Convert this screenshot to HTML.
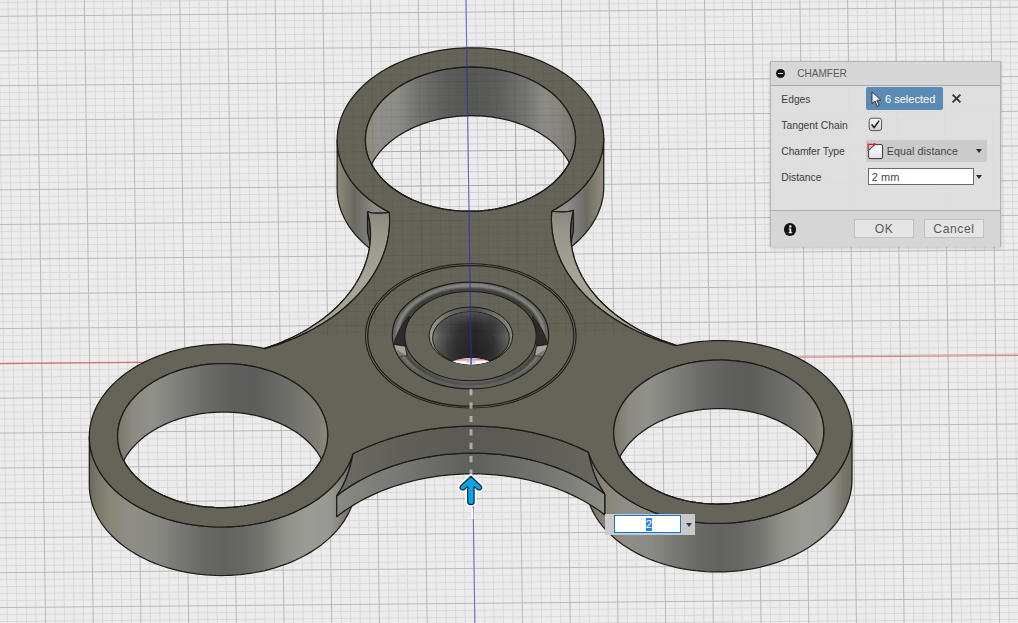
<!DOCTYPE html>
<html><head><meta charset="utf-8"><title>Chamfer</title>
<style>
html,body{margin:0;padding:0;}
body{width:1018px;height:623px;overflow:hidden;position:relative;background:#ececec;font-family:"Liberation Sans",sans-serif;}
</style></head><body>
<svg width="1018" height="623" viewBox="0 0 1018 623" style="position:absolute;left:0;top:0">
<defs><linearGradient id="gLo" gradientUnits="userSpaceOnUse" x1="89.3" y1="0" x2="355.9" y2="0"><stop offset="0.000" stop-color="#6a675c"/><stop offset="0.035" stop-color="#7d7a6d"/><stop offset="0.070" stop-color="#878477"/><stop offset="0.150" stop-color="#8f8e86"/><stop offset="0.250" stop-color="#8a8a85"/><stop offset="0.340" stop-color="#787873"/><stop offset="0.425" stop-color="#686965"/><stop offset="0.500" stop-color="#626360"/><stop offset="0.575" stop-color="#666763"/><stop offset="0.650" stop-color="#74746f"/><stop offset="0.735" stop-color="#8f908a"/><stop offset="0.815" stop-color="#9b9c96"/><stop offset="0.900" stop-color="#989892"/><stop offset="0.935" stop-color="#8a887e"/><stop offset="0.965" stop-color="#787669"/><stop offset="1.000" stop-color="#6f6c60"/></linearGradient><linearGradient id="gRo" gradientUnits="userSpaceOnUse" x1="585.4" y1="0" x2="852.0" y2="0"><stop offset="0.000" stop-color="#6a675c"/><stop offset="0.035" stop-color="#7d7a6d"/><stop offset="0.070" stop-color="#878477"/><stop offset="0.150" stop-color="#8f8e86"/><stop offset="0.250" stop-color="#8a8a85"/><stop offset="0.340" stop-color="#787873"/><stop offset="0.425" stop-color="#686965"/><stop offset="0.500" stop-color="#626360"/><stop offset="0.575" stop-color="#666763"/><stop offset="0.650" stop-color="#74746f"/><stop offset="0.735" stop-color="#8f908a"/><stop offset="0.815" stop-color="#9b9c96"/><stop offset="0.900" stop-color="#989892"/><stop offset="0.935" stop-color="#8a887e"/><stop offset="0.965" stop-color="#787669"/><stop offset="1.000" stop-color="#6f6c60"/></linearGradient><linearGradient id="gTo" gradientUnits="userSpaceOnUse" x1="337.2" y1="0" x2="603.7" y2="0"><stop offset="0.000" stop-color="#8d8978"/><stop offset="0.025" stop-color="#827e70"/><stop offset="0.065" stop-color="#6a6860"/><stop offset="0.105" stop-color="#7a7a75"/><stop offset="0.140" stop-color="#8d8d88"/><stop offset="0.175" stop-color="#8a8a86"/><stop offset="0.500" stop-color="#777777"/><stop offset="0.825" stop-color="#8c8c88"/><stop offset="0.860" stop-color="#8f8f8b"/><stop offset="0.895" stop-color="#7c7c78"/><stop offset="0.935" stop-color="#6c6b64"/><stop offset="0.975" stop-color="#858173"/><stop offset="1.000" stop-color="#8f8b7c"/></linearGradient><linearGradient id="gLi" gradientUnits="userSpaceOnUse" x1="117.6" y1="0" x2="327.6" y2="0"><stop offset="0.000" stop-color="#79776c"/><stop offset="0.075" stop-color="#8c8b81"/><stop offset="0.165" stop-color="#91918b"/><stop offset="0.285" stop-color="#7f7f7a"/><stop offset="0.425" stop-color="#6a6b68"/><stop offset="0.560" stop-color="#5e5f5c"/><stop offset="0.650" stop-color="#5d5e5b"/><stop offset="0.750" stop-color="#666763"/><stop offset="0.850" stop-color="#73736e"/><stop offset="0.955" stop-color="#817f75"/><stop offset="1.000" stop-color="#8d8a7c"/></linearGradient><linearGradient id="gRi" gradientUnits="userSpaceOnUse" x1="613.7" y1="0" x2="823.8" y2="0"><stop offset="0.000" stop-color="#79776c"/><stop offset="0.075" stop-color="#8c8b81"/><stop offset="0.165" stop-color="#91918b"/><stop offset="0.285" stop-color="#7f7f7a"/><stop offset="0.425" stop-color="#6a6b68"/><stop offset="0.560" stop-color="#5e5f5c"/><stop offset="0.650" stop-color="#5d5e5b"/><stop offset="0.750" stop-color="#666763"/><stop offset="0.850" stop-color="#73736e"/><stop offset="0.955" stop-color="#817f75"/><stop offset="1.000" stop-color="#8d8a7c"/></linearGradient><linearGradient id="gTi" gradientUnits="userSpaceOnUse" x1="365.4" y1="0" x2="575.5" y2="0"><stop offset="0.000" stop-color="#8e8c80"/><stop offset="0.075" stop-color="#90908a"/><stop offset="0.160" stop-color="#8c8c86"/><stop offset="0.245" stop-color="#737370"/><stop offset="0.395" stop-color="#5c5d5a"/><stop offset="0.500" stop-color="#565754"/><stop offset="0.630" stop-color="#5e5f5c"/><stop offset="0.765" stop-color="#747471"/><stop offset="0.850" stop-color="#8c8c87"/><stop offset="0.935" stop-color="#85847c"/><stop offset="1.000" stop-color="#7a786c"/></linearGradient><linearGradient id="gF" gradientUnits="userSpaceOnUse" x1="328.7" y1="0" x2="612.8" y2="0"><stop offset="0.000" stop-color="#8c8c86"/><stop offset="0.200" stop-color="#7c7c77"/><stop offset="0.500" stop-color="#5e5f5b"/><stop offset="0.800" stop-color="#797974"/><stop offset="1.000" stop-color="#92928c"/></linearGradient><linearGradient id="gFc" gradientUnits="userSpaceOnUse" x1="342.9" y1="0" x2="598.6" y2="0"><stop offset="0.000" stop-color="#6a6962"/><stop offset="0.250" stop-color="#5f5e57"/><stop offset="0.500" stop-color="#5a5953"/><stop offset="0.750" stop-color="#5e5d56"/><stop offset="1.000" stop-color="#66655e"/></linearGradient><linearGradient id="gLc" gradientUnits="userSpaceOnUse" x1="0" y1="210" x2="0" y2="350"><stop offset="0" stop-color="#88857a"/><stop offset="0.15" stop-color="#98958a"/><stop offset="0.5" stop-color="#a6a397"/><stop offset="1" stop-color="#a4a194"/></linearGradient><clipPath id="ch0"><path d="M575.48 138.43 L575.41 135.90 L575.22 133.38 L574.89 130.87 L574.44 128.36 L573.85 125.87 L573.15 123.39 L572.31 120.94 L571.35 118.50 L570.26 116.09 L569.05 113.71 L567.72 111.37 L566.28 109.05 L564.71 106.77 L563.02 104.54 L561.23 102.34 L559.32 100.19 L557.30 98.09 L555.17 96.04 L552.94 94.05 L550.61 92.10 L548.18 90.22 L545.65 88.40 L543.03 86.64 L540.32 84.94 L537.53 83.31 L534.65 81.75 L531.69 80.26 L528.66 78.85 L525.55 77.50 L522.38 76.24 L519.15 75.05 L515.85 73.94 L512.50 72.91 L509.10 71.96 L505.65 71.09 L502.15 70.31 L498.62 69.62 L495.05 69.01 L491.45 68.48 L487.83 68.05 L484.18 67.70 L480.52 67.44 L476.84 67.26 L473.16 67.18 L469.47 67.18 L465.79 67.28 L462.11 67.46 L458.44 67.73 L454.79 68.09 L451.15 68.53 L447.54 69.06 L443.96 69.68 L440.41 70.39 L436.89 71.18 L433.42 72.05 L429.99 73.01 L426.62 74.05 L423.29 75.16 L420.03 76.36 L416.83 77.63 L413.69 78.98 L410.63 80.41 L407.63 81.91 L404.72 83.47 L401.88 85.11 L399.13 86.81 L396.47 88.58 L393.90 90.41 L391.42 92.30 L389.05 94.24 L386.77 96.25 L384.59 98.30 L382.52 100.41 L380.56 102.56 L378.71 104.76 L376.97 107.00 L375.35 109.28 L373.84 111.60 L372.46 113.95 L371.19 116.33 L370.05 118.75 L369.03 121.18 L368.13 123.64 L367.36 126.12 L366.72 128.61 L366.21 131.12 L365.82 133.63 L365.56 136.16 L365.44 138.68 L365.44 141.21 L365.57 143.74 L365.83 146.26 L366.22 148.77 L366.74 151.27 L367.38 153.75 L368.16 156.22 L369.05 158.66 L370.08 161.09 L371.23 163.48 L372.50 165.84 L373.89 168.18 L375.39 170.47 L377.02 172.73 L378.76 174.95 L380.62 177.12 L382.58 179.24 L384.65 181.32 L386.83 183.34 L389.11 185.31 L391.50 187.23 L393.98 189.08 L396.55 190.87 L399.21 192.60 L401.97 194.26 L404.80 195.86 L407.72 197.38 L410.72 198.84 L413.78 200.22 L416.92 201.52 L420.13 202.75 L423.39 203.90 L426.72 204.97 L430.10 205.96 L433.52 206.86 L437.00 207.69 L440.51 208.43 L444.06 209.08 L447.65 209.65 L451.26 210.13 L454.89 210.52 L458.55 210.83 L462.22 211.04 L465.90 211.17 L469.58 211.21 L473.27 211.16 L476.95 211.02 L480.63 210.80 L484.29 210.48 L487.93 210.08 L491.56 209.59 L495.16 209.02 L498.72 208.35 L502.26 207.61 L505.75 206.78 L509.20 205.86 L512.60 204.86 L515.95 203.79 L519.24 202.63 L522.48 201.39 L525.65 200.08 L528.75 198.69 L531.78 197.23 L534.73 195.70 L537.61 194.10 L540.40 192.43 L543.11 190.69 L545.73 188.90 L548.25 187.04 L550.68 185.12 L553.01 183.14 L555.23 181.11 L557.36 179.03 L559.37 176.90 L561.28 174.72 L563.08 172.50 L564.76 170.24 L566.32 167.94 L567.77 165.61 L569.09 163.24 L570.30 160.84 L571.38 158.42 L572.34 155.97 L573.17 153.50 L573.87 151.02 L574.45 148.52 L574.90 146.00 L575.22 143.48 L575.42 140.96 Z"/></clipPath><clipPath id="ch1"><path d="M327.64 434.84 L327.57 432.31 L327.38 429.79 L327.05 427.27 L326.60 424.77 L326.02 422.28 L325.31 419.80 L324.47 417.34 L323.51 414.91 L322.42 412.50 L321.22 410.12 L319.89 407.77 L318.44 405.46 L316.87 403.18 L315.18 400.95 L313.39 398.75 L311.48 396.60 L309.46 394.50 L307.33 392.45 L305.10 390.45 L302.77 388.51 L300.34 386.63 L297.81 384.80 L295.19 383.04 L292.48 381.35 L289.69 379.72 L286.81 378.16 L283.85 376.67 L280.82 375.25 L277.72 373.91 L274.54 372.64 L271.31 371.45 L268.01 370.35 L264.66 369.32 L261.26 368.37 L257.81 367.50 L254.31 366.72 L250.78 366.03 L247.21 365.41 L243.61 364.89 L239.99 364.45 L236.34 364.10 L232.68 363.84 L229.00 363.67 L225.32 363.59 L221.63 363.59 L217.95 363.68 L214.27 363.87 L210.60 364.14 L206.95 364.49 L203.31 364.94 L199.70 365.47 L196.12 366.09 L192.57 366.80 L189.05 367.59 L185.58 368.46 L182.15 369.42 L178.78 370.45 L175.46 371.57 L172.19 372.77 L168.99 374.04 L165.85 375.39 L162.79 376.82 L159.79 378.31 L156.88 379.88 L154.04 381.52 L151.29 383.22 L148.63 384.99 L146.06 386.81 L143.58 388.70 L141.21 390.65 L138.93 392.65 L136.75 394.71 L134.68 396.82 L132.72 398.97 L130.87 401.17 L129.13 403.41 L127.51 405.69 L126.00 408.01 L124.62 410.36 L123.35 412.74 L122.21 415.15 L121.19 417.59 L120.29 420.05 L119.52 422.53 L118.88 425.02 L118.37 427.53 L117.98 430.04 L117.73 432.57 L117.60 435.09 L117.60 437.62 L117.73 440.15 L117.99 442.67 L118.38 445.18 L118.90 447.68 L119.54 450.16 L120.32 452.63 L121.22 455.07 L122.24 457.49 L123.39 459.89 L124.66 462.25 L126.05 464.58 L127.55 466.88 L129.18 469.14 L130.92 471.35 L132.78 473.52 L134.74 475.65 L136.81 477.73 L138.99 479.75 L141.28 481.72 L143.66 483.63 L146.14 485.49 L148.71 487.28 L151.37 489.01 L154.13 490.67 L156.96 492.26 L159.88 493.79 L162.88 495.24 L165.95 496.62 L169.08 497.93 L172.29 499.16 L175.55 500.31 L178.88 501.38 L182.26 502.36 L185.68 503.27 L189.16 504.09 L192.67 504.83 L196.22 505.49 L199.81 506.05 L203.42 506.53 L207.05 506.93 L210.71 507.23 L214.38 507.45 L218.06 507.58 L221.74 507.62 L225.43 507.57 L229.11 507.43 L232.79 507.21 L236.45 506.89 L240.10 506.49 L243.72 506.00 L247.32 505.42 L250.88 504.76 L254.42 504.01 L257.91 503.18 L261.36 502.27 L264.76 501.27 L268.11 500.19 L271.41 499.04 L274.64 497.80 L277.81 496.49 L280.91 495.10 L283.94 493.64 L286.90 492.11 L289.77 490.51 L292.56 488.84 L295.27 487.10 L297.89 485.30 L300.41 483.44 L302.84 481.52 L305.17 479.55 L307.40 477.52 L309.52 475.44 L311.53 473.31 L313.44 471.13 L315.24 468.91 L316.92 466.65 L318.48 464.35 L319.93 462.02 L321.25 459.65 L322.46 457.25 L323.54 454.83 L324.50 452.38 L325.33 449.91 L326.03 447.43 L326.61 444.92 L327.06 442.41 L327.38 439.89 L327.58 437.37 Z"/></clipPath><clipPath id="ch2"><path d="M823.77 431.25 L823.70 428.73 L823.50 426.20 L823.18 423.69 L822.73 421.18 L822.14 418.69 L821.44 416.21 L820.60 413.76 L819.64 411.32 L818.55 408.92 L817.34 406.54 L816.01 404.19 L814.56 401.87 L813.00 399.60 L811.31 397.36 L809.51 395.17 L807.60 393.02 L805.59 390.92 L803.46 388.87 L801.23 386.87 L798.90 384.93 L796.46 383.04 L793.94 381.22 L791.32 379.46 L788.61 377.76 L785.81 376.13 L782.94 374.57 L779.98 373.08 L776.95 371.67 L773.84 370.33 L770.67 369.06 L767.44 367.87 L764.14 366.76 L760.79 365.73 L757.39 364.78 L753.93 363.92 L750.44 363.14 L746.91 362.44 L743.34 361.83 L739.74 361.31 L736.12 360.87 L732.47 360.52 L728.81 360.26 L725.13 360.08 L721.45 360.00 L717.76 360.00 L714.08 360.10 L710.40 360.28 L706.73 360.55 L703.07 360.91 L699.44 361.35 L695.83 361.89 L692.25 362.51 L688.70 363.21 L685.18 364.00 L681.71 364.87 L678.28 365.83 L674.91 366.87 L671.58 367.99 L668.32 369.18 L665.12 370.46 L661.98 371.81 L658.91 373.23 L655.92 374.73 L653.01 376.29 L650.17 377.93 L647.42 379.63 L644.76 381.40 L642.19 383.23 L639.71 385.12 L637.33 387.07 L635.06 389.07 L632.88 391.12 L630.81 393.23 L628.85 395.38 L627.00 397.58 L625.26 399.82 L623.64 402.10 L622.13 404.42 L620.74 406.77 L619.48 409.16 L618.34 411.57 L617.32 414.00 L616.42 416.46 L615.65 418.94 L615.01 421.43 L614.50 423.94 L614.11 426.46 L613.85 428.98 L613.73 431.51 L613.73 434.04 L613.86 436.56 L614.12 439.08 L614.51 441.59 L615.03 444.09 L615.67 446.57 L616.45 449.04 L617.34 451.49 L618.37 453.91 L619.51 456.30 L620.78 458.67 L622.17 461.00 L623.68 463.29 L625.31 465.55 L627.05 467.77 L628.91 469.94 L630.87 472.06 L632.94 474.14 L635.12 476.16 L637.40 478.13 L639.79 480.05 L642.27 481.90 L644.84 483.69 L647.50 485.42 L650.26 487.08 L653.09 488.68 L656.01 490.20 L659.01 491.66 L662.07 493.04 L665.21 494.34 L668.42 495.57 L671.68 496.72 L675.01 497.79 L678.38 498.78 L681.81 499.69 L685.29 500.51 L688.80 501.25 L692.35 501.90 L695.94 502.47 L699.55 502.95 L703.18 503.34 L706.84 503.65 L710.51 503.86 L714.19 503.99 L717.87 504.03 L721.56 503.98 L725.24 503.85 L728.92 503.62 L732.58 503.31 L736.22 502.90 L739.85 502.42 L743.45 501.84 L747.01 501.18 L750.55 500.43 L754.04 499.60 L757.49 498.68 L760.89 497.69 L764.24 496.61 L767.53 495.45 L770.77 494.21 L773.94 492.90 L777.04 491.52 L780.07 490.05 L783.02 488.52 L785.90 486.92 L788.69 485.25 L791.40 483.52 L794.01 481.72 L796.54 479.86 L798.97 477.94 L801.30 475.96 L803.52 473.93 L805.65 471.85 L807.66 469.72 L809.57 467.55 L811.36 465.33 L813.05 463.07 L814.61 460.77 L816.06 458.43 L817.38 456.06 L818.59 453.67 L819.67 451.24 L820.63 448.79 L821.46 446.33 L822.16 443.84 L822.74 441.34 L823.19 438.83 L823.51 436.31 L823.70 433.78 Z"/></clipPath><clipPath id="cAbove"><path d="M0 0H1018V331.7L0 339.0Z"/></clipPath></defs>
<rect width="1018" height="623" fill="#ececec"/>
<g id="grid"><path d="M-49.16 0L-40.31 623 M-39.62 0L-30.77 623 M-30.08 0L-21.23 623 M-20.54 0L-11.69 623 M-1.46 0L7.39 623 M8.08 0L16.93 623 M17.62 0L26.47 623 M27.16 0L36.01 623 M46.24 0L55.09 623 M55.78 0L64.63 623 M65.32 0L74.17 623 M74.86 0L83.71 623 M93.94 0L102.79 623 M103.48 0L112.33 623 M113.02 0L121.87 623 M122.56 0L131.41 623 M141.64 0L150.49 623 M151.18 0L160.03 623 M160.72 0L169.57 623 M170.26 0L179.11 623 M189.34 0L198.19 623 M198.88 0L207.73 623 M208.42 0L217.27 623 M217.96 0L226.81 623 M237.04 0L245.89 623 M246.58 0L255.43 623 M256.12 0L264.97 623 M265.66 0L274.51 623 M284.74 0L293.59 623 M294.28 0L303.13 623 M303.82 0L312.67 623 M313.36 0L322.21 623 M332.44 0L341.29 623 M341.98 0L350.83 623 M351.52 0L360.37 623 M361.06 0L369.91 623 M380.14 0L388.99 623 M389.68 0L398.53 623 M399.22 0L408.07 623 M408.76 0L417.61 623 M427.84 0L436.69 623 M437.38 0L446.23 623 M446.92 0L455.77 623 M456.46 0L465.31 623 M475.54 0L484.39 623 M485.08 0L493.93 623 M494.62 0L503.47 623 M504.16 0L513.01 623 M523.24 0L532.09 623 M532.78 0L541.63 623 M542.32 0L551.17 623 M551.86 0L560.71 623 M570.94 0L579.79 623 M580.48 0L589.33 623 M590.02 0L598.87 623 M599.56 0L608.41 623 M618.64 0L627.49 623 M628.18 0L637.03 623 M637.72 0L646.57 623 M647.26 0L656.11 623 M666.34 0L675.19 623 M675.88 0L684.73 623 M685.42 0L694.27 623 M694.96 0L703.81 623 M714.04 0L722.89 623 M723.58 0L732.43 623 M733.12 0L741.97 623 M742.66 0L751.51 623 M761.74 0L770.59 623 M771.28 0L780.13 623 M780.82 0L789.67 623 M790.36 0L799.21 623 M809.44 0L818.29 623 M818.98 0L827.83 623 M828.52 0L837.37 623 M838.06 0L846.91 623 M857.14 0L865.99 623 M866.68 0L875.53 623 M876.22 0L885.07 623 M885.76 0L894.61 623 M904.84 0L913.69 623 M914.38 0L923.23 623 M923.92 0L932.77 623 M933.46 0L942.31 623 M952.54 0L961.39 623 M962.08 0L970.93 623 M971.62 0L980.47 623 M981.16 0L990.01 623 M1000.24 0L1009.09 623 M1009.78 0L1018.63 623 M1019.32 0L1028.17 623 M1028.86 0L1037.71 623 M1047.94 0L1056.79 623 M1057.48 0L1066.33 623 M1067.02 0L1075.87 623 M1076.56 0L1085.41 623 M0 -11.46L1018 -20.62 M0 -4.52L1018 -13.68 M0 2.42L1018 -6.74 M0 9.36L1018 0.20 M0 23.24L1018 14.08 M0 30.18L1018 21.02 M0 37.12L1018 27.96 M0 44.06L1018 34.90 M0 57.94L1018 48.78 M0 64.88L1018 55.72 M0 71.82L1018 62.66 M0 78.76L1018 69.60 M0 92.64L1018 83.48 M0 99.58L1018 90.42 M0 106.52L1018 97.36 M0 113.46L1018 104.30 M0 127.34L1018 118.18 M0 134.28L1018 125.12 M0 141.22L1018 132.06 M0 148.16L1018 139.00 M0 162.04L1018 152.88 M0 168.98L1018 159.82 M0 175.92L1018 166.76 M0 182.86L1018 173.70 M0 196.74L1018 187.58 M0 203.68L1018 194.52 M0 210.62L1018 201.46 M0 217.56L1018 208.40 M0 231.44L1018 222.28 M0 238.38L1018 229.22 M0 245.32L1018 236.16 M0 252.26L1018 243.10 M0 266.14L1018 256.98 M0 273.08L1018 263.92 M0 280.02L1018 270.86 M0 286.96L1018 277.80 M0 300.84L1018 291.68 M0 307.78L1018 298.62 M0 314.72L1018 305.56 M0 321.66L1018 312.50 M0 335.54L1018 326.38 M0 342.48L1018 333.32 M0 349.42L1018 340.26 M0 356.36L1018 347.20 M0 370.28L1018 361.12 M0 377.26L1018 368.10 M0 384.24L1018 375.08 M0 391.22L1018 382.06 M0 405.18L1018 396.02 M0 412.16L1018 403.00 M0 419.14L1018 409.98 M0 426.12L1018 416.96 M0 440.08L1018 430.92 M0 447.06L1018 437.90 M0 454.04L1018 444.88 M0 461.02L1018 451.86 M0 474.98L1018 465.82 M0 481.96L1018 472.80 M0 488.94L1018 479.78 M0 495.92L1018 486.76 M0 509.88L1018 500.72 M0 516.86L1018 507.70 M0 523.84L1018 514.68 M0 530.82L1018 521.66 M0 544.78L1018 535.62 M0 551.76L1018 542.60 M0 558.74L1018 549.58 M0 565.72L1018 556.56 M0 579.68L1018 570.52 M0 586.66L1018 577.50 M0 593.64L1018 584.48 M0 600.62L1018 591.46 M0 614.58L1018 605.42 M0 621.56L1018 612.40 M0 628.54L1018 619.38 M0 635.52L1018 626.36 M0 649.48L1018 640.32 M0 656.46L1018 647.30 M0 663.44L1018 654.28 M0 670.42L1018 661.26" stroke="#d7d7d7" stroke-width="0.9" fill="none"/><path d="M-58.70 0L-49.85 623 M-11.00 0L-2.15 623 M36.70 0L45.55 623 M84.40 0L93.25 623 M132.10 0L140.95 623 M179.80 0L188.65 623 M227.50 0L236.35 623 M275.20 0L284.05 623 M322.90 0L331.75 623 M370.60 0L379.45 623 M418.30 0L427.15 623 M466.00 0L474.85 623 M513.70 0L522.55 623 M561.40 0L570.25 623 M609.10 0L617.95 623 M656.80 0L665.65 623 M704.50 0L713.35 623 M752.20 0L761.05 623 M799.90 0L808.75 623 M847.60 0L856.45 623 M895.30 0L904.15 623 M943.00 0L951.85 623 M990.70 0L999.55 623 M1038.40 0L1047.25 623 M0 -18.40L1018 -27.56 M0 16.30L1018 7.14 M0 51.00L1018 41.84 M0 85.70L1018 76.54 M0 120.40L1018 111.24 M0 155.10L1018 145.94 M0 189.80L1018 180.64 M0 224.50L1018 215.34 M0 259.20L1018 250.04 M0 293.90L1018 284.74 M0 328.60L1018 319.44 M0 363.30L1018 354.14 M0 398.20L1018 389.04 M0 433.10L1018 423.94 M0 468.00L1018 458.84 M0 502.90L1018 493.74 M0 537.80L1018 528.64 M0 572.70L1018 563.54 M0 607.60L1018 598.44 M0 642.50L1018 633.34" stroke="#b9b9b9" stroke-width="1" fill="none"/></g>
<path d="M0 363.6L1018 355.46" stroke="#e83030" stroke-opacity="0.62" stroke-width="1.1"/>
<path d="M466.00 0L474.85 623" stroke="#3030e0" stroke-opacity="0.55" stroke-width="1.1"/>
<g id="body"><path d="M89.32 436.56 L89.41 439.95 L89.69 443.33 L90.15 446.70 L90.80 450.06 L91.62 453.40 L92.62 456.71 L93.81 459.99 L95.17 463.24 L96.70 466.45 L98.41 469.62 L100.29 472.75 L102.34 475.82 L104.55 478.83 L106.93 481.79 L109.46 484.68 L112.15 487.51 L114.99 490.26 L117.98 492.94 L121.12 495.54 L124.39 498.06 L127.80 500.49 L131.34 502.83 L135.01 505.08 L138.79 507.24 L142.69 509.29 L146.70 511.25 L150.82 513.10 L155.03 514.84 L159.34 516.48 L163.73 518.00 L168.21 519.41 L172.76 520.70 L177.38 521.88 L182.06 522.94 L186.79 523.88 L191.58 524.70 L196.41 525.39 L201.27 525.96 L206.16 526.41 L211.08 526.73 L216.01 526.93 L220.95 527.00 L225.90 526.94 L230.84 526.76 L235.76 526.46 L240.67 526.03 L245.56 525.47 L250.41 524.79 L255.23 523.99 L260.00 523.07 L264.72 522.03 L269.38 520.86 L273.97 519.58 L278.50 518.19 L282.95 516.68 L287.31 515.06 L291.59 513.33 L295.77 511.49 L299.85 509.55 L303.83 507.51 L307.69 505.37 L311.44 503.13 L315.06 500.80 L318.56 498.38 L321.92 495.87 L325.15 493.28 L328.24 490.61 L331.18 487.87 L333.98 485.05 L336.61 482.17 L339.10 479.22 L341.42 476.21 L343.58 473.15 L345.57 470.03 L347.39 466.87 L349.05 463.66 L350.52 460.42 L351.83 457.14 L352.95 453.83 L352.95 453.83 L352.37 456.85 L351.71 459.93 L350.97 463.09 L350.12 466.32 L349.16 469.66 L348.04 473.11 L346.75 476.73 L345.22 480.55 L343.35 484.68 L340.93 489.31 L337.39 494.96 L336.69 497.01 L336.69 498.25 L336.69 499.50 L336.69 500.74 L336.69 501.98 L336.69 503.23 L336.69 504.47 L336.69 505.71 L336.69 506.96 L336.69 508.20 L336.69 509.45 L336.69 510.69 L336.69 511.93 L336.69 513.18 L336.69 514.42 L336.69 515.67 L337.39 516.10 L340.93 512.94 L343.35 510.80 L345.22 509.16 L346.75 507.82 L348.04 506.70 L349.16 505.73 L350.12 504.88 L350.97 504.13 L351.71 503.47 L352.37 502.87 L352.95 502.34 L352.95 502.34 L351.83 505.65 L350.52 508.93 L349.05 512.17 L347.39 515.38 L345.57 518.54 L343.58 521.66 L341.42 524.72 L339.10 527.73 L336.61 530.68 L333.98 533.56 L331.18 536.38 L328.24 539.12 L325.15 541.79 L321.92 544.38 L318.56 546.89 L315.06 549.31 L311.44 551.64 L307.69 553.88 L303.83 556.02 L299.85 558.06 L295.77 560.00 L291.59 561.84 L287.31 563.57 L282.95 565.19 L278.50 566.70 L273.97 568.09 L269.38 569.37 L264.72 570.54 L260.00 571.58 L255.23 572.50 L250.41 573.30 L245.56 573.98 L240.67 574.54 L235.76 574.97 L230.84 575.27 L225.90 575.45 L220.95 575.51 L216.01 575.44 L211.08 575.24 L206.16 574.92 L201.27 574.47 L196.41 573.90 L191.58 573.21 L186.79 572.39 L182.06 571.45 L177.38 570.39 L172.76 569.21 L168.21 567.92 L163.73 566.51 L159.34 564.99 L155.03 563.35 L150.82 561.61 L146.70 559.76 L142.69 557.80 L138.79 555.75 L135.01 553.59 L131.34 551.34 L127.80 549.00 L124.39 546.57 L121.12 544.05 L117.98 541.45 L114.99 538.77 L112.15 536.02 L109.46 533.19 L106.93 530.30 L104.55 527.34 L102.34 524.33 L100.29 521.26 L98.41 518.13 L96.70 514.96 L95.17 511.75 L93.81 508.50 L92.62 505.22 L91.62 501.91 L90.80 498.57 L90.15 495.21 L89.69 491.84 L89.41 488.46 L89.32 485.07 Z" fill="url(#gLo)" stroke="#1d1c19" stroke-width="1.25" stroke-linejoin="round" /><path d="M852.03 431.05 L851.94 434.44 L851.67 437.83 L851.21 441.20 L850.58 444.57 L849.76 447.92 L848.76 451.25 L847.58 454.55 L846.22 457.82 L844.69 461.05 L842.99 464.24 L841.12 467.39 L839.07 470.49 L836.86 473.54 L834.49 476.53 L831.96 479.46 L829.28 482.33 L826.44 485.12 L823.45 487.84 L820.32 490.49 L817.05 493.05 L813.65 495.53 L810.11 497.93 L806.45 500.23 L802.67 502.44 L798.77 504.55 L794.76 506.56 L790.65 508.47 L786.44 510.28 L782.13 511.97 L777.74 513.56 L773.27 515.04 L768.72 516.40 L764.11 517.64 L759.43 518.77 L754.69 519.77 L749.91 520.66 L745.08 521.43 L740.22 522.07 L735.32 522.58 L730.41 522.98 L725.48 523.25 L720.53 523.39 L715.59 523.41 L710.65 523.30 L705.72 523.06 L700.81 522.70 L695.93 522.22 L691.07 521.61 L686.26 520.88 L681.49 520.02 L676.77 519.05 L672.10 517.95 L667.51 516.74 L662.98 515.41 L658.53 513.97 L654.16 512.41 L649.88 510.74 L645.69 508.96 L641.61 507.08 L637.63 505.10 L633.76 503.01 L630.02 500.83 L626.39 498.55 L622.89 496.18 L619.52 493.72 L616.29 491.18 L613.19 488.56 L610.25 485.85 L607.45 483.08 L604.81 480.23 L602.32 477.32 L599.99 474.34 L597.83 471.31 L595.83 468.22 L594.01 465.09 L592.35 461.90 L590.87 458.68 L589.56 455.42 L588.43 452.13 L588.43 452.13 L589.01 455.14 L589.67 458.21 L590.42 461.36 L591.27 464.58 L592.24 467.90 L593.35 471.34 L594.65 474.94 L596.18 478.74 L598.06 482.84 L600.48 487.43 L604.03 493.03 L604.73 495.07 L604.73 496.31 L604.73 497.56 L604.73 498.80 L604.73 500.05 L604.73 501.29 L604.73 502.53 L604.73 503.78 L604.73 505.02 L604.73 506.27 L604.73 507.51 L604.73 508.75 L604.73 510.00 L604.73 511.24 L604.73 512.48 L604.73 513.73 L604.03 514.18 L600.48 511.06 L598.06 508.96 L596.18 507.35 L594.65 506.03 L593.35 504.92 L592.24 503.97 L591.27 503.14 L590.42 502.40 L589.67 501.75 L589.01 501.16 L588.43 500.64 L588.43 500.64 L589.56 503.93 L590.87 507.19 L592.35 510.41 L594.01 513.60 L595.83 516.73 L597.83 519.82 L599.99 522.85 L602.32 525.83 L604.81 528.74 L607.45 531.59 L610.25 534.36 L613.19 537.07 L616.29 539.69 L619.52 542.23 L622.89 544.69 L626.39 547.06 L630.02 549.34 L633.76 551.52 L637.63 553.61 L641.61 555.59 L645.69 557.47 L649.88 559.25 L654.16 560.92 L658.53 562.48 L662.98 563.92 L667.51 565.25 L672.10 566.46 L676.77 567.56 L681.49 568.53 L686.26 569.39 L691.07 570.12 L695.93 570.73 L700.81 571.21 L705.72 571.57 L710.65 571.81 L715.59 571.92 L720.53 571.90 L725.48 571.76 L730.41 571.49 L735.32 571.09 L740.22 570.58 L745.08 569.94 L749.91 569.17 L754.69 568.28 L759.43 567.28 L764.11 566.15 L768.72 564.91 L773.27 563.55 L777.74 562.07 L782.13 560.48 L786.44 558.79 L790.65 556.98 L794.76 555.07 L798.77 553.06 L802.67 550.95 L806.45 548.74 L810.11 546.44 L813.65 544.04 L817.05 541.56 L820.32 539.00 L823.45 536.35 L826.44 533.63 L829.28 530.84 L831.96 527.97 L834.49 525.04 L836.86 522.05 L839.07 519.00 L841.12 515.90 L842.99 512.75 L844.69 509.56 L846.22 506.33 L847.58 503.06 L848.76 499.76 L849.76 496.43 L850.58 493.08 L851.21 489.71 L851.67 486.34 L851.94 482.95 L852.03 479.56 Z" fill="url(#gRo)" stroke="#1d1c19" stroke-width="1.25" stroke-linejoin="round" /><path d="M337.16 140.15 L337.17 141.21 L337.20 142.27 L337.24 143.33 L337.31 144.39 L337.39 145.45 L337.49 146.50 L337.60 147.56 L337.74 148.61 L337.89 149.66 L338.06 150.72 L338.25 151.77 L338.46 152.81 L338.68 153.86 L338.92 154.91 L339.18 155.95 L339.46 156.99 L339.75 158.03 L340.06 159.06 L340.39 160.09 L340.74 161.12 L341.11 162.15 L341.49 163.17 L341.89 164.19 L342.30 165.21 L342.74 166.23 L343.19 167.24 L343.65 168.24 L344.14 169.24 L344.64 170.24 L345.16 171.24 L345.70 172.23 L346.25 173.21 L346.82 174.19 L347.40 175.17 L348.00 176.14 L348.62 177.11 L349.26 178.07 L349.91 179.02 L350.58 179.98 L351.26 180.92 L351.96 181.86 L352.67 182.79 L353.41 183.72 L354.15 184.64 L354.92 185.56 L355.69 186.47 L356.49 187.37 L357.30 188.27 L358.12 189.16 L358.96 190.04 L359.81 190.92 L360.68 191.79 L361.57 192.65 L362.46 193.51 L363.38 194.36 L364.30 195.20 L365.25 196.03 L366.20 196.86 L367.17 197.68 L368.15 198.49 L369.15 199.29 L370.16 200.08 L371.19 200.87 L372.22 201.65 L373.28 202.42 L374.34 203.18 L375.42 203.93 L376.51 204.67 L377.61 205.41 L378.72 206.13 L379.85 206.85 L380.99 207.56 L382.14 208.25 L383.30 208.94 L384.48 209.62 L385.66 210.29 L386.86 210.95 L388.07 211.61 L389.29 212.25 L389.29 212.25 L387.48 212.54 L385.66 212.78 L383.82 212.98 L381.96 213.12 L380.07 213.21 L378.15 213.22 L376.20 213.17 L374.20 213.03 L372.16 212.79 L370.05 212.44 L367.87 211.94 L367.55 212.92 L367.55 214.16 L367.55 215.40 L367.55 216.65 L367.55 217.89 L367.55 219.14 L367.55 220.38 L367.55 221.62 L367.55 222.87 L367.55 224.11 L367.55 225.36 L367.55 226.60 L367.55 227.84 L367.55 229.09 L367.55 230.33 L367.55 231.57 L367.87 233.08 L370.05 236.07 L372.16 238.91 L374.20 241.64 L376.20 244.27 L378.15 246.81 L380.07 249.28 L381.96 251.68 L383.82 254.02 L385.66 256.32 L387.48 258.56 L389.29 260.76 L389.29 260.76 L388.07 260.12 L386.86 259.46 L385.66 258.80 L384.48 258.13 L383.30 257.45 L382.14 256.76 L380.99 256.07 L379.85 255.36 L378.72 254.64 L377.61 253.92 L376.51 253.18 L375.42 252.44 L374.34 251.69 L373.28 250.93 L372.22 250.16 L371.19 249.38 L370.16 248.59 L369.15 247.80 L368.15 247.00 L367.17 246.19 L366.20 245.37 L365.25 244.54 L364.30 243.71 L363.38 242.87 L362.46 242.02 L361.57 241.16 L360.68 240.30 L359.81 239.43 L358.96 238.55 L358.12 237.67 L357.30 236.78 L356.49 235.88 L355.69 234.98 L354.92 234.07 L354.15 233.15 L353.41 232.23 L352.67 231.30 L351.96 230.37 L351.26 229.43 L350.58 228.49 L349.91 227.53 L349.26 226.58 L348.62 225.62 L348.00 224.65 L347.40 223.68 L346.82 222.70 L346.25 221.72 L345.70 220.74 L345.16 219.75 L344.64 218.75 L344.14 217.75 L343.65 216.75 L343.19 215.75 L342.74 214.74 L342.30 213.72 L341.89 212.70 L341.49 211.68 L341.11 210.66 L340.74 209.63 L340.39 208.60 L340.06 207.57 L339.75 206.54 L339.46 205.50 L339.18 204.46 L338.92 203.42 L338.68 202.37 L338.46 201.32 L338.25 200.28 L338.06 199.23 L337.89 198.17 L337.74 197.12 L337.60 196.07 L337.49 195.01 L337.39 193.96 L337.31 192.90 L337.24 191.84 L337.20 190.78 L337.17 189.72 L337.16 188.66 Z" fill="url(#gTo)" stroke="#1d1c19" stroke-width="1.25" stroke-linejoin="round" /><path d="M603.74 138.23 L603.73 139.29 L603.71 140.35 L603.66 141.40 L603.60 142.46 L603.52 143.52 L603.42 144.58 L603.31 145.64 L603.17 146.69 L603.02 147.75 L602.85 148.80 L602.67 149.86 L602.46 150.91 L602.24 151.96 L602.00 153.00 L601.74 154.05 L601.47 155.09 L601.17 156.14 L600.86 157.18 L600.54 158.21 L600.19 159.25 L599.83 160.28 L599.45 161.31 L599.05 162.34 L598.64 163.36 L598.20 164.38 L597.75 165.40 L597.29 166.41 L596.81 167.42 L596.30 168.42 L595.79 169.43 L595.25 170.42 L594.70 171.42 L594.14 172.41 L593.55 173.39 L592.95 174.37 L592.33 175.35 L591.70 176.32 L591.05 177.28 L590.38 178.24 L589.70 179.20 L589.00 180.15 L588.29 181.09 L587.56 182.03 L586.82 182.96 L586.05 183.89 L585.28 184.81 L584.49 185.73 L583.68 186.63 L582.86 187.54 L582.02 188.43 L581.16 189.32 L580.30 190.20 L579.41 191.08 L578.52 191.95 L577.61 192.81 L576.68 193.66 L575.74 194.51 L574.79 195.35 L573.82 196.18 L572.83 197.01 L571.84 197.82 L570.83 198.63 L569.81 199.43 L568.77 200.23 L567.72 201.01 L566.66 201.79 L565.58 202.55 L564.49 203.31 L563.39 204.06 L562.28 204.81 L561.15 205.54 L560.02 206.26 L558.87 206.98 L557.70 207.68 L556.53 208.38 L555.34 209.07 L554.15 209.75 L552.94 210.41 L551.72 211.07 L551.72 211.07 L553.53 211.34 L555.35 211.55 L557.19 211.72 L559.05 211.84 L560.93 211.90 L562.85 211.89 L564.80 211.81 L566.79 211.64 L568.84 211.37 L570.94 210.98 L573.12 210.45 L573.44 211.43 L573.44 212.67 L573.44 213.92 L573.44 215.16 L573.44 216.40 L573.44 217.65 L573.44 218.89 L573.44 220.14 L573.44 221.38 L573.44 222.62 L573.44 223.87 L573.44 225.11 L573.44 226.35 L573.44 227.60 L573.44 228.84 L573.44 230.09 L573.12 231.60 L570.94 234.62 L568.84 237.49 L566.79 240.25 L564.80 242.90 L562.85 245.47 L560.93 247.97 L559.05 250.40 L557.19 252.77 L555.35 255.09 L553.53 257.36 L551.72 259.58 L551.72 259.58 L552.94 258.92 L554.15 258.26 L555.34 257.58 L556.53 256.89 L557.70 256.19 L558.87 255.49 L560.02 254.77 L561.15 254.05 L562.28 253.32 L563.39 252.57 L564.49 251.82 L565.58 251.06 L566.66 250.30 L567.72 249.52 L568.77 248.74 L569.81 247.94 L570.83 247.14 L571.84 246.33 L572.83 245.52 L573.82 244.69 L574.79 243.86 L575.74 243.02 L576.68 242.17 L577.61 241.32 L578.52 240.46 L579.41 239.59 L580.30 238.71 L581.16 237.83 L582.02 236.94 L582.86 236.05 L583.68 235.14 L584.49 234.24 L585.28 233.32 L586.05 232.40 L586.82 231.47 L587.56 230.54 L588.29 229.60 L589.00 228.66 L589.70 227.71 L590.38 226.75 L591.05 225.79 L591.70 224.83 L592.33 223.86 L592.95 222.88 L593.55 221.90 L594.14 220.92 L594.70 219.93 L595.25 218.93 L595.79 217.94 L596.30 216.93 L596.81 215.93 L597.29 214.92 L597.75 213.91 L598.20 212.89 L598.64 211.87 L599.05 210.85 L599.45 209.82 L599.83 208.79 L600.19 207.76 L600.54 206.72 L600.86 205.69 L601.17 204.65 L601.47 203.60 L601.74 202.56 L602.00 201.51 L602.24 200.47 L602.46 199.42 L602.67 198.37 L602.85 197.31 L603.02 196.26 L603.17 195.20 L603.31 194.15 L603.42 193.09 L603.52 192.03 L603.60 190.97 L603.66 189.91 L603.71 188.86 L603.73 187.80 L603.74 186.74 Z" fill="url(#gTo)" stroke="#1d1c19" stroke-width="1.25" stroke-linejoin="round" /><path d="M336.69 495.94 L339.24 493.95 L341.86 492.00 L344.53 490.09 L347.27 488.22 L350.06 486.39 L352.90 484.59 L355.81 482.85 L358.76 481.14 L361.77 479.48 L364.84 477.86 L367.95 476.29 L371.10 474.77 L374.31 473.29 L377.56 471.86 L380.85 470.48 L384.19 469.15 L387.57 467.86 L390.98 466.63 L394.44 465.45 L397.92 464.32 L401.45 463.24 L405.00 462.21 L408.59 461.23 L412.20 460.31 L415.85 459.45 L419.52 458.63 L423.21 457.87 L426.92 457.17 L430.66 456.52 L434.41 455.93 L438.19 455.39 L441.97 454.91 L445.77 454.48 L449.58 454.11 L453.41 453.80 L457.24 453.55 L461.07 453.35 L464.91 453.20 L468.76 453.12 L472.60 453.09 L476.45 453.12 L480.29 453.21 L484.12 453.35 L487.95 453.55 L491.78 453.81 L495.59 454.12 L499.39 454.49 L503.18 454.92 L506.95 455.40 L510.70 455.94 L514.44 456.54 L518.16 457.19 L521.85 457.89 L525.52 458.65 L529.16 459.47 L532.78 460.34 L536.37 461.26 L539.93 462.23 L543.45 463.26 L546.94 464.34 L550.40 465.48 L553.81 466.66 L557.19 467.90 L560.53 469.18 L563.83 470.51 L567.08 471.90 L570.29 473.33 L573.45 474.81 L576.56 476.33 L579.62 477.91 L582.63 479.52 L585.59 481.19 L588.50 482.89 L591.35 484.64 L594.15 486.43 L596.88 488.27 L599.56 490.14 L602.18 492.05 L604.73 494.00 L604.73 514.79 L602.18 512.84 L599.56 510.93 L596.88 509.06 L594.15 507.22 L591.35 505.43 L588.50 503.68 L585.59 501.98 L582.63 500.31 L579.62 498.70 L576.56 497.12 L573.45 495.60 L570.29 494.12 L567.08 492.69 L563.83 491.30 L560.53 489.97 L557.19 488.69 L553.81 487.45 L550.40 486.27 L546.94 485.13 L543.45 484.05 L539.93 483.02 L536.37 482.05 L532.78 481.13 L529.16 480.26 L525.52 479.44 L521.85 478.68 L518.16 477.98 L514.44 477.33 L510.70 476.73 L506.95 476.19 L503.18 475.71 L499.39 475.28 L495.59 474.91 L491.78 474.60 L487.95 474.34 L484.12 474.14 L480.29 474.00 L476.45 473.91 L472.60 473.88 L468.76 473.91 L464.91 473.99 L461.07 474.14 L457.24 474.34 L453.41 474.59 L449.58 474.90 L445.77 475.27 L441.97 475.70 L438.19 476.18 L434.41 476.72 L430.66 477.31 L426.92 477.96 L423.21 478.66 L419.52 479.42 L415.85 480.24 L412.20 481.10 L408.59 482.02 L405.00 483.00 L401.45 484.03 L397.92 485.11 L394.44 486.24 L390.98 487.42 L387.57 488.65 L384.19 489.94 L380.85 491.27 L377.56 492.65 L374.31 494.08 L371.10 495.56 L367.95 497.08 L364.84 498.65 L361.77 500.27 L358.76 501.93 L355.81 503.64 L352.90 505.38 L350.06 507.18 L347.27 509.01 L344.53 510.88 L341.86 512.79 L339.24 514.74 L336.69 516.73 Z" fill="url(#gF)" stroke="#1d1c19" stroke-width="1.25" stroke-linejoin="round" /><path d="M352.95 453.83 L355.52 452.51 L358.13 451.23 L360.76 449.97 L363.43 448.74 L366.12 447.54 L368.84 446.37 L371.58 445.23 L374.36 444.12 L377.15 443.04 L379.98 442.00 L382.82 440.98 L385.69 440.00 L388.59 439.05 L391.50 438.13 L394.43 437.24 L397.39 436.39 L400.36 435.56 L403.36 434.78 L406.37 434.02 L409.40 433.30 L412.44 432.61 L415.50 431.96 L418.57 431.34 L421.66 430.75 L424.76 430.20 L427.88 429.69 L431.00 429.20 L434.13 428.76 L437.28 428.34 L440.43 427.97 L443.59 427.62 L446.76 427.32 L449.94 427.05 L453.12 426.81 L456.30 426.61 L459.49 426.44 L462.68 426.31 L465.88 426.22 L469.07 426.16 L472.27 426.14 L475.46 426.15 L478.66 426.20 L481.85 426.28 L485.04 426.40 L488.22 426.56 L491.40 426.75 L494.58 426.97 L497.75 427.23 L500.91 427.53 L504.06 427.86 L507.21 428.23 L510.34 428.63 L513.47 429.07 L516.58 429.54 L519.68 430.04 L522.77 430.59 L525.85 431.16 L528.91 431.77 L531.95 432.41 L534.98 433.09 L537.99 433.80 L540.99 434.55 L543.96 435.33 L546.92 436.14 L549.86 436.98 L552.77 437.86 L555.66 438.77 L558.54 439.71 L561.38 440.69 L564.21 441.69 L567.01 442.73 L569.78 443.80 L572.53 444.90 L575.25 446.03 L577.95 447.19 L580.61 448.38 L583.25 449.60 L585.85 450.85 L588.43 452.13 L588.43 452.13 L589.02 455.18 L589.69 458.29 L590.45 461.48 L591.32 464.75 L592.31 468.12 L593.45 471.61 L594.78 475.27 L596.36 479.15 L598.31 483.35 L600.86 488.08 L604.73 494.00 L604.73 494.00 L602.18 492.05 L599.56 490.14 L596.88 488.27 L594.15 486.43 L591.35 484.64 L588.50 482.89 L585.59 481.19 L582.63 479.52 L579.62 477.91 L576.56 476.33 L573.45 474.81 L570.29 473.33 L567.08 471.90 L563.83 470.51 L560.53 469.18 L557.19 467.90 L553.81 466.66 L550.40 465.48 L546.94 464.34 L543.45 463.26 L539.93 462.23 L536.37 461.26 L532.78 460.34 L529.16 459.47 L525.52 458.65 L521.85 457.89 L518.16 457.19 L514.44 456.54 L510.70 455.94 L506.95 455.40 L503.18 454.92 L499.39 454.49 L495.59 454.12 L491.78 453.81 L487.95 453.55 L484.12 453.35 L480.29 453.21 L476.45 453.12 L472.60 453.09 L468.76 453.12 L464.91 453.20 L461.07 453.35 L457.24 453.55 L453.41 453.80 L449.58 454.11 L445.77 454.48 L441.97 454.91 L438.19 455.39 L434.41 455.93 L430.66 456.52 L426.92 457.17 L423.21 457.87 L419.52 458.63 L415.85 459.45 L412.20 460.31 L408.59 461.23 L405.00 462.21 L401.45 463.24 L397.92 464.32 L394.44 465.45 L390.98 466.63 L387.57 467.86 L384.19 469.15 L380.85 470.48 L377.56 471.86 L374.31 473.29 L371.10 474.77 L367.95 476.29 L364.84 477.86 L361.77 479.48 L358.76 481.14 L355.81 482.85 L352.90 484.59 L350.06 486.39 L347.27 488.22 L344.53 490.09 L341.86 492.00 L339.24 493.95 L336.69 495.94 L336.69 495.94 L340.56 489.96 L343.10 485.19 L345.04 480.97 L346.62 477.07 L347.95 473.39 L349.09 469.88 L350.07 466.49 L350.94 463.21 L351.69 460.01 L352.36 456.89 L352.95 453.83 Z" fill="url(#gFc)" stroke="#1d1c19" stroke-width="1.25" stroke-linejoin="round" /><path d="M367.55 211.85 L368.17 214.29 L368.72 216.74 L369.19 219.20 L369.60 221.66 L369.93 224.13 L370.19 226.60 L370.38 229.07 L370.50 231.55 L370.54 234.03 L370.52 236.51 L370.42 239.00 L370.25 241.47 L370.01 243.95 L369.69 246.43 L369.31 248.89 L368.85 251.36 L368.32 253.82 L367.72 256.27 L367.05 258.71 L366.31 261.14 L365.50 263.57 L364.62 265.98 L363.67 268.38 L362.65 270.77 L361.56 273.14 L360.40 275.50 L359.18 277.84 L357.89 280.17 L356.53 282.48 L355.10 284.77 L353.61 287.04 L352.05 289.29 L350.43 291.52 L348.74 293.72 L346.99 295.91 L345.18 298.07 L343.31 300.20 L341.37 302.31 L339.38 304.39 L337.32 306.45 L335.21 308.48 L333.04 310.48 L330.81 312.45 L328.52 314.39 L326.18 316.29 L323.79 318.17 L321.34 320.01 L318.84 321.82 L316.29 323.60 L313.68 325.34 L311.03 327.05 L308.33 328.71 L305.58 330.35 L302.79 331.94 L299.95 333.50 L297.06 335.02 L294.14 336.50 L291.17 337.94 L288.16 339.33 L285.11 340.69 L282.03 342.01 L278.90 343.28 L275.74 344.51 L272.55 345.70 L269.32 346.84 L266.07 347.95 L262.78 349.00 L259.46 350.01 L256.11 350.98 L252.74 351.90 L249.34 352.77 L245.92 353.60 L242.47 354.38 L239.01 355.12 L235.52 355.80 L232.01 356.44 L228.49 357.03 L224.95 357.58 L221.40 358.07 L221.40 378.86 L224.95 378.37 L228.49 377.82 L232.01 377.23 L235.52 376.59 L239.01 375.91 L242.47 375.17 L245.92 374.39 L249.34 373.56 L252.74 372.69 L256.11 371.77 L259.46 370.80 L262.78 369.79 L266.07 368.74 L269.32 367.63 L272.55 366.49 L275.74 365.30 L278.90 364.07 L282.03 362.80 L285.11 361.48 L288.16 360.12 L291.17 358.73 L294.14 357.29 L297.06 355.81 L299.95 354.29 L302.79 352.73 L305.58 351.14 L308.33 349.50 L311.03 347.84 L313.68 346.13 L316.29 344.39 L318.84 342.61 L321.34 340.80 L323.79 338.96 L326.18 337.08 L328.52 335.18 L330.81 333.24 L333.04 331.27 L335.21 329.27 L337.32 327.24 L339.38 325.18 L341.37 323.10 L343.31 320.99 L345.18 318.86 L346.99 316.70 L348.74 314.51 L350.43 312.31 L352.05 310.08 L353.61 307.83 L355.10 305.56 L356.53 303.27 L357.89 300.96 L359.18 298.63 L360.40 296.29 L361.56 293.93 L362.65 291.56 L363.67 289.17 L364.62 286.77 L365.50 284.36 L366.31 281.93 L367.05 279.50 L367.72 277.06 L368.32 274.61 L368.85 272.15 L369.31 269.68 L369.69 267.22 L370.01 264.74 L370.25 262.26 L370.42 259.79 L370.52 257.30 L370.54 254.82 L370.50 252.34 L370.38 249.86 L370.19 247.39 L369.93 244.92 L369.60 242.45 L369.19 239.99 L368.72 237.53 L368.17 235.08 L367.55 232.64 Z" fill="#55534b" stroke="#1d1c19" stroke-width="1.25" stroke-linejoin="round" /><path d="M389.29 212.25 L389.45 214.41 L389.56 216.57 L389.63 218.73 L389.64 220.89 L389.60 223.05 L389.52 225.21 L389.38 227.38 L389.20 229.54 L388.96 231.69 L388.68 233.85 L388.35 236.00 L387.96 238.15 L387.53 240.30 L387.05 242.44 L386.52 244.57 L385.95 246.70 L385.32 248.83 L384.65 250.94 L383.92 253.05 L383.15 255.15 L382.33 257.25 L381.47 259.33 L380.55 261.41 L379.59 263.47 L378.58 265.53 L377.53 267.58 L376.43 269.61 L375.28 271.63 L374.09 273.64 L372.85 275.64 L371.56 277.62 L370.23 279.59 L368.86 281.55 L367.44 283.49 L365.98 285.41 L364.47 287.32 L362.92 289.22 L361.33 291.09 L359.69 292.96 L358.02 294.80 L356.30 296.62 L354.54 298.43 L352.74 300.22 L350.90 301.98 L349.01 303.73 L347.09 305.46 L345.13 307.17 L343.14 308.86 L341.10 310.52 L339.03 312.16 L336.92 313.78 L334.77 315.38 L332.58 316.96 L330.37 318.51 L328.11 320.04 L325.82 321.54 L323.50 323.02 L321.15 324.48 L318.76 325.90 L316.34 327.31 L313.89 328.69 L311.41 330.04 L308.90 331.36 L306.35 332.66 L303.78 333.93 L301.18 335.17 L298.56 336.39 L295.90 337.57 L293.22 338.73 L290.52 339.86 L287.79 340.96 L285.03 342.03 L282.25 343.07 L279.45 344.08 L276.63 345.06 L273.78 346.01 L270.91 346.93 L268.03 347.82 L265.12 348.68 L265.12 348.68 L262.56 349.39 L259.87 350.11 L257.06 350.85 L254.08 351.61 L250.91 352.39 L247.50 353.20 L243.79 354.04 L239.67 354.92 L234.96 355.85 L229.27 356.87 L221.40 358.07 L221.40 358.07 L224.95 357.58 L228.49 357.03 L232.01 356.44 L235.52 355.80 L239.01 355.12 L242.47 354.38 L245.92 353.60 L249.34 352.77 L252.74 351.90 L256.11 350.98 L259.46 350.01 L262.78 349.00 L266.07 347.95 L269.32 346.84 L272.55 345.70 L275.74 344.51 L278.90 343.28 L282.03 342.01 L285.11 340.69 L288.16 339.33 L291.17 337.94 L294.14 336.50 L297.06 335.02 L299.95 333.50 L302.79 331.94 L305.58 330.35 L308.33 328.71 L311.03 327.05 L313.68 325.34 L316.29 323.60 L318.84 321.82 L321.34 320.01 L323.79 318.17 L326.18 316.29 L328.52 314.39 L330.81 312.45 L333.04 310.48 L335.21 308.48 L337.32 306.45 L339.38 304.39 L341.37 302.31 L343.31 300.20 L345.18 298.07 L346.99 295.91 L348.74 293.72 L350.43 291.52 L352.05 289.29 L353.61 287.04 L355.10 284.77 L356.53 282.48 L357.89 280.17 L359.18 277.84 L360.40 275.50 L361.56 273.14 L362.65 270.77 L363.67 268.38 L364.62 265.98 L365.50 263.57 L366.31 261.14 L367.05 258.71 L367.72 256.27 L368.32 253.82 L368.85 251.36 L369.31 248.89 L369.69 246.43 L370.01 243.95 L370.25 241.47 L370.42 239.00 L370.52 236.51 L370.54 234.03 L370.50 231.55 L370.38 229.07 L370.19 226.60 L369.93 224.13 L369.60 221.66 L369.19 219.20 L368.72 216.74 L368.17 214.29 L367.55 211.85 L367.55 211.85 L369.77 212.38 L371.92 212.76 L373.99 213.01 L376.02 213.16 L378.00 213.22 L379.94 213.21 L381.86 213.13 L383.75 212.98 L385.61 212.79 L387.46 212.54 L389.29 212.25 Z" fill="url(#gLc)" stroke="#1d1c19" stroke-width="1.25" stroke-linejoin="round" /><path d="M719.81 354.47 L716.26 354.03 L712.72 353.53 L709.19 352.99 L705.69 352.41 L702.20 351.77 L698.73 351.08 L695.29 350.35 L691.86 349.57 L688.46 348.75 L685.09 347.88 L681.74 346.96 L678.42 346.00 L675.13 344.99 L671.87 343.94 L668.64 342.84 L665.45 341.70 L662.28 340.51 L659.16 339.28 L656.07 338.01 L653.02 336.70 L650.01 335.34 L647.04 333.95 L644.11 332.51 L641.23 331.03 L638.38 329.52 L635.59 327.96 L632.84 326.37 L630.13 324.74 L627.48 323.07 L624.87 321.37 L622.32 319.63 L619.81 317.86 L617.36 316.05 L614.96 314.21 L612.62 312.33 L610.33 310.43 L608.10 308.49 L605.93 306.52 L603.81 304.52 L601.75 302.50 L599.75 300.44 L597.81 298.36 L595.94 296.25 L594.12 294.12 L592.37 291.96 L590.68 289.78 L589.06 287.57 L587.50 285.35 L586.00 283.10 L584.57 280.83 L583.21 278.54 L581.91 276.23 L580.68 273.91 L579.52 271.57 L578.43 269.21 L577.41 266.84 L576.45 264.45 L575.57 262.05 L574.75 259.64 L574.01 257.21 L573.33 254.78 L572.73 252.34 L572.20 249.89 L571.74 247.43 L571.35 244.97 L571.03 242.50 L570.79 240.03 L570.61 237.55 L570.51 235.07 L570.48 232.59 L570.52 230.11 L570.63 227.63 L570.82 225.15 L571.08 222.67 L571.41 220.20 L571.81 217.73 L572.28 215.27 L572.82 212.81 L573.44 210.36 L573.44 231.15 L572.82 233.60 L572.28 236.06 L571.81 238.52 L571.41 240.99 L571.08 243.46 L570.82 245.94 L570.63 248.42 L570.52 250.90 L570.48 253.38 L570.51 255.86 L570.61 258.34 L570.79 260.82 L571.03 263.29 L571.35 265.76 L571.74 268.22 L572.20 270.68 L572.73 273.13 L573.33 275.57 L574.01 278.00 L574.75 280.43 L575.57 282.84 L576.45 285.24 L577.41 287.63 L578.43 290.00 L579.52 292.36 L580.68 294.70 L581.91 297.02 L583.21 299.33 L584.57 301.62 L586.00 303.89 L587.50 306.14 L589.06 308.36 L590.68 310.57 L592.37 312.75 L594.12 314.91 L595.94 317.04 L597.81 319.15 L599.75 321.23 L601.75 323.29 L603.81 325.31 L605.93 327.31 L608.10 329.28 L610.33 331.22 L612.62 333.12 L614.96 335.00 L617.36 336.84 L619.81 338.65 L622.32 340.42 L624.87 342.16 L627.48 343.86 L630.13 345.53 L632.84 347.16 L635.59 348.75 L638.38 350.31 L641.23 351.82 L644.11 353.30 L647.04 354.74 L650.01 356.13 L653.02 357.49 L656.07 358.80 L659.16 360.07 L662.28 361.30 L665.45 362.49 L668.64 363.63 L671.87 364.73 L675.13 365.78 L678.42 366.79 L681.74 367.75 L685.09 368.67 L688.46 369.54 L691.86 370.36 L695.29 371.14 L698.73 371.87 L702.20 372.56 L705.69 373.20 L709.19 373.78 L712.72 374.32 L716.26 374.82 L719.81 375.26 Z" fill="#55534b" stroke="#1d1c19" stroke-width="1.25" stroke-linejoin="round" /><path d="M676.10 345.71 L673.19 344.90 L670.30 344.05 L667.43 343.17 L664.59 342.26 L661.76 341.32 L658.96 340.35 L656.18 339.35 L653.42 338.32 L650.69 337.26 L647.98 336.17 L645.30 335.05 L642.64 333.90 L640.01 332.72 L637.41 331.52 L634.84 330.28 L632.30 329.02 L629.78 327.74 L627.30 326.42 L624.84 325.08 L622.42 323.71 L620.03 322.32 L617.68 320.90 L615.35 319.45 L613.06 317.98 L610.81 316.48 L608.59 314.96 L606.40 313.42 L604.25 311.85 L602.14 310.26 L600.06 308.65 L598.02 307.01 L596.02 305.36 L594.06 303.68 L592.14 301.98 L590.25 300.25 L588.41 298.51 L586.60 296.75 L584.84 294.97 L583.12 293.17 L581.44 291.35 L579.80 289.52 L578.21 287.66 L576.65 285.79 L575.14 283.90 L573.68 282.00 L572.26 280.08 L570.88 278.14 L569.55 276.19 L568.26 274.23 L567.02 272.25 L565.82 270.25 L564.67 268.25 L563.57 266.23 L562.51 264.20 L561.50 262.16 L560.53 260.11 L559.62 258.05 L558.75 255.97 L557.92 253.89 L557.15 251.80 L556.42 249.70 L555.75 247.59 L555.12 245.48 L554.54 243.36 L554.00 241.23 L553.52 239.10 L553.09 236.96 L552.70 234.81 L552.37 232.67 L552.08 230.51 L551.84 228.36 L551.65 226.20 L551.51 224.04 L551.43 221.88 L551.39 219.72 L551.39 217.56 L551.45 215.40 L551.56 213.23 L551.72 211.07 L551.72 211.07 L553.55 211.34 L555.39 211.56 L557.26 211.73 L559.14 211.85 L561.06 211.90 L563.00 211.89 L564.98 211.79 L567.00 211.62 L569.08 211.33 L571.22 210.92 L573.44 210.36 L573.44 210.36 L572.82 212.81 L572.28 215.27 L571.81 217.73 L571.41 220.20 L571.08 222.67 L570.82 225.15 L570.63 227.63 L570.52 230.11 L570.48 232.59 L570.51 235.07 L570.61 237.55 L570.79 240.03 L571.03 242.50 L571.35 244.97 L571.74 247.43 L572.20 249.89 L572.73 252.34 L573.33 254.78 L574.01 257.21 L574.75 259.64 L575.57 262.05 L576.45 264.45 L577.41 266.84 L578.43 269.21 L579.52 271.57 L580.68 273.91 L581.91 276.23 L583.21 278.54 L584.57 280.83 L586.00 283.10 L587.50 285.35 L589.06 287.57 L590.68 289.78 L592.37 291.96 L594.12 294.12 L595.94 296.25 L597.81 298.36 L599.75 300.44 L601.75 302.50 L603.81 304.52 L605.93 306.52 L608.10 308.49 L610.33 310.43 L612.62 312.33 L614.96 314.21 L617.36 316.05 L619.81 317.86 L622.32 319.63 L624.87 321.37 L627.48 323.07 L630.13 324.74 L632.84 326.37 L635.59 327.96 L638.38 329.52 L641.23 331.03 L644.11 332.51 L647.04 333.95 L650.01 335.34 L653.02 336.70 L656.07 338.01 L659.16 339.28 L662.28 340.51 L665.45 341.70 L668.64 342.84 L671.87 343.94 L675.13 344.99 L678.42 346.00 L681.74 346.96 L685.09 347.88 L688.46 348.75 L691.86 349.57 L695.29 350.35 L698.73 351.08 L702.20 351.77 L705.69 352.41 L709.19 352.99 L712.72 353.53 L716.26 354.03 L719.81 354.47 L719.81 354.47 L711.94 353.38 L706.25 352.44 L701.54 351.58 L697.42 350.76 L693.71 349.97 L690.31 349.21 L687.14 348.48 L684.16 347.76 L681.34 347.06 L678.66 346.38 L676.10 345.71 Z" fill="url(#gLc)" stroke="#1d1c19" stroke-width="1.25" stroke-linejoin="round" /><path d="M551.72 211.07 L556.06 208.65 L560.26 206.11 L564.29 203.45 L568.17 200.68 L571.87 197.80 L575.39 194.82 L578.73 191.74 L581.89 188.57 L584.84 185.32 L587.60 181.98 L590.16 178.57 L592.50 175.09 L594.63 171.54 L596.55 167.94 L598.24 164.29 L599.71 160.60 L600.96 156.87 L601.98 153.11 L602.76 149.32 L603.32 145.52 L603.65 141.70 L603.74 137.89 L603.60 134.07 L603.23 130.26 L602.62 126.47 L601.79 122.70 L600.72 118.96 L599.43 115.25 L597.91 111.59 L596.17 107.97 L594.21 104.41 L592.04 100.91 L589.65 97.47 L587.06 94.11 L584.26 90.83 L581.26 87.63 L578.07 84.52 L574.69 81.51 L571.13 78.60 L567.39 75.79 L563.48 73.10 L559.41 70.52 L555.19 68.06 L550.82 65.72 L546.30 63.52 L541.66 61.44 L536.89 59.50 L532.01 57.70 L527.01 56.04 L521.92 54.53 L516.74 53.16 L511.48 51.95 L506.14 50.89 L500.75 49.98 L495.30 49.23 L489.81 48.63 L484.28 48.19 L478.73 47.91 L473.16 47.79 L467.60 47.83 L462.03 48.03 L456.48 48.39 L450.96 48.91 L445.46 49.59 L440.02 50.42 L434.62 51.40 L429.29 52.54 L424.03 53.83 L418.85 55.27 L413.76 56.86 L408.77 58.59 L403.89 60.46 L399.12 62.47 L394.48 64.61 L389.97 66.89 L385.60 69.29 L381.38 71.81 L377.32 74.44 L373.42 77.20 L369.68 80.06 L366.13 83.02 L362.75 86.08 L359.56 89.24 L356.57 92.48 L353.78 95.80 L351.19 99.20 L348.80 102.67 L346.63 106.20 L344.68 109.79 L342.95 113.43 L341.43 117.12 L340.15 120.84 L339.09 124.60 L338.26 128.38 L337.66 132.18 L337.29 135.99 L337.16 139.81 L337.26 143.63 L337.59 147.44 L338.15 151.23 L338.95 155.01 L339.97 158.76 L341.22 162.47 L342.70 166.14 L344.40 169.77 L346.32 173.34 L348.46 176.85 L350.81 180.30 L353.36 183.67 L356.13 186.97 L359.09 190.18 L362.25 193.31 L365.59 196.34 L369.12 199.27 L372.83 202.09 L376.71 204.81 L380.75 207.41 L384.94 209.89 L389.29 212.25 L389.45 214.41 L389.56 216.57 L389.63 218.73 L389.64 220.89 L389.60 223.05 L389.52 225.21 L389.38 227.38 L389.20 229.54 L388.96 231.69 L388.68 233.85 L388.35 236.00 L387.96 238.15 L387.53 240.30 L387.05 242.44 L386.52 244.57 L385.95 246.70 L385.32 248.83 L384.65 250.94 L383.92 253.05 L383.15 255.15 L382.33 257.25 L381.47 259.33 L380.55 261.41 L379.59 263.47 L378.58 265.53 L377.53 267.58 L376.43 269.61 L375.28 271.63 L374.09 273.64 L372.85 275.64 L371.56 277.62 L370.23 279.59 L368.86 281.55 L367.44 283.49 L365.98 285.41 L364.47 287.32 L362.92 289.22 L361.33 291.09 L359.69 292.96 L358.02 294.80 L356.30 296.62 L354.54 298.43 L352.74 300.22 L350.90 301.98 L349.01 303.73 L347.09 305.46 L345.13 307.17 L343.14 308.86 L341.10 310.52 L339.03 312.16 L336.92 313.78 L334.77 315.38 L332.58 316.96 L330.37 318.51 L328.11 320.04 L325.82 321.54 L323.50 323.02 L321.15 324.48 L318.76 325.90 L316.34 327.31 L313.89 328.69 L311.41 330.04 L308.90 331.36 L306.35 332.66 L303.78 333.93 L301.18 335.17 L298.56 336.39 L295.90 337.57 L293.22 338.73 L290.52 339.86 L287.79 340.96 L285.03 342.03 L282.25 343.07 L279.45 344.08 L276.63 345.06 L273.78 346.01 L270.91 346.93 L268.03 347.82 L265.12 348.68 L259.96 347.61 L254.74 346.68 L249.47 345.89 L244.16 345.26 L238.81 344.77 L233.43 344.43 L228.03 344.24 L222.63 344.20 L217.22 344.31 L211.83 344.57 L206.45 344.99 L201.10 345.55 L195.79 346.26 L190.51 347.11 L185.29 348.11 L180.14 349.26 L175.05 350.54 L170.04 351.97 L165.12 353.54 L160.29 355.23 L155.56 357.07 L150.95 359.03 L146.45 361.11 L142.08 363.32 L137.84 365.65 L133.74 368.09 L129.78 370.65 L125.98 373.31 L122.34 376.07 L118.86 378.93 L115.55 381.89 L112.42 384.93 L109.47 388.06 L106.71 391.26 L104.13 394.54 L101.75 397.88 L99.57 401.29 L97.60 404.75 L95.83 408.26 L94.26 411.82 L92.91 415.42 L91.77 419.05 L90.85 422.71 L90.14 426.39 L89.65 430.08 L89.38 433.79 L89.33 437.49 L89.50 441.20 L89.88 444.89 L90.49 448.57 L91.31 452.23 L92.35 455.86 L93.60 459.46 L95.06 463.01 L96.74 466.53 L98.62 469.99 L100.70 473.39 L102.99 476.74 L105.47 480.01 L108.15 483.21 L111.01 486.34 L114.06 489.38 L117.28 492.33 L120.68 495.19 L124.25 497.95 L127.98 500.61 L131.86 503.16 L135.89 505.60 L140.07 507.93 L144.38 510.13 L148.82 512.22 L153.38 514.17 L158.05 516.00 L162.83 517.70 L167.71 519.26 L172.68 520.68 L177.74 521.97 L182.86 523.11 L188.05 524.11 L193.30 524.96 L198.60 525.66 L203.93 526.22 L209.30 526.63 L214.69 526.89 L220.09 527.00 L225.49 526.95 L230.89 526.76 L236.28 526.42 L241.64 525.93 L246.98 525.29 L252.27 524.50 L257.52 523.57 L262.70 522.49 L267.82 521.27 L272.87 519.90 L277.83 518.40 L282.71 516.76 L287.48 514.99 L292.15 513.09 L296.70 511.06 L301.13 508.91 L305.44 506.64 L309.60 504.25 L313.63 501.74 L317.50 499.13 L321.22 496.42 L324.77 493.60 L328.16 490.69 L331.37 487.69 L334.41 484.60 L337.26 481.43 L339.92 478.19 L342.39 474.87 L344.66 471.49 L346.73 468.06 L348.60 464.56 L350.26 461.03 L351.71 457.45 L352.95 453.83 L355.52 452.51 L358.13 451.23 L360.76 449.97 L363.43 448.74 L366.12 447.54 L368.84 446.37 L371.58 445.23 L374.36 444.12 L377.15 443.04 L379.98 442.00 L382.82 440.98 L385.69 440.00 L388.59 439.05 L391.50 438.13 L394.43 437.24 L397.39 436.39 L400.36 435.56 L403.36 434.78 L406.37 434.02 L409.40 433.30 L412.44 432.61 L415.50 431.96 L418.57 431.34 L421.66 430.75 L424.76 430.20 L427.88 429.69 L431.00 429.20 L434.13 428.76 L437.28 428.34 L440.43 427.97 L443.59 427.62 L446.76 427.32 L449.94 427.05 L453.12 426.81 L456.30 426.61 L459.49 426.44 L462.68 426.31 L465.88 426.22 L469.07 426.16 L472.27 426.14 L475.46 426.15 L478.66 426.20 L481.85 426.28 L485.04 426.40 L488.22 426.56 L491.40 426.75 L494.58 426.97 L497.75 427.23 L500.91 427.53 L504.06 427.86 L507.21 428.23 L510.34 428.63 L513.47 429.07 L516.58 429.54 L519.68 430.04 L522.77 430.59 L525.85 431.16 L528.91 431.77 L531.95 432.41 L534.98 433.09 L537.99 433.80 L540.99 434.55 L543.96 435.33 L546.92 436.14 L549.86 436.98 L552.77 437.86 L555.66 438.77 L558.54 439.71 L561.38 440.69 L564.21 441.69 L567.01 442.73 L569.78 443.80 L572.53 444.90 L575.25 446.03 L577.95 447.19 L580.61 448.38 L583.25 449.60 L585.85 450.85 L588.43 452.13 L589.67 455.73 L591.13 459.29 L592.80 462.80 L594.67 466.26 L596.74 469.67 L599.02 473.02 L601.50 476.30 L604.16 479.50 L607.02 482.63 L610.06 485.67 L613.28 488.63 L616.67 491.49 L620.23 494.26 L623.95 496.92 L627.83 499.47 L631.85 501.92 L636.02 504.25 L640.33 506.46 L644.76 508.55 L649.32 510.51 L653.99 512.35 L658.77 514.05 L663.64 515.61 L668.61 517.04 L673.66 518.33 L678.78 519.48 L683.97 520.48 L689.22 521.34 L694.51 522.05 L699.84 522.62 L705.21 523.03 L710.60 523.29 L716.00 523.41 L721.40 523.37 L726.80 523.19 L732.19 522.85 L737.56 522.36 L742.89 521.73 L748.19 520.95 L753.43 520.02 L758.62 518.95 L763.75 517.73 L768.80 516.38 L773.76 514.88 L778.64 513.25 L783.42 511.48 L788.09 509.59 L792.65 507.56 L797.09 505.42 L801.39 503.15 L805.56 500.76 L809.59 498.26 L813.47 495.66 L817.20 492.94 L820.76 490.13 L824.15 487.22 L827.37 484.22 L830.42 481.14 L833.27 477.97 L835.94 474.73 L838.42 471.42 L840.70 468.05 L842.78 464.61 L844.66 461.12 L846.33 457.59 L847.79 454.01 L849.03 450.39 L850.06 446.75 L850.88 443.08 L851.48 439.39 L851.86 435.69 L852.02 431.98 L851.97 428.28 L851.69 424.58 L851.19 420.89 L850.48 417.22 L849.55 413.58 L848.41 409.96 L847.05 406.38 L845.48 402.85 L843.70 399.36 L841.72 395.92 L839.54 392.55 L837.15 389.24 L834.57 386.00 L831.81 382.84 L828.85 379.75 L825.71 376.75 L822.40 373.85 L818.92 371.04 L815.27 368.33 L811.47 365.72 L807.51 363.22 L803.40 360.84 L799.16 358.57 L794.79 356.43 L790.28 354.41 L785.67 352.51 L780.94 350.75 L776.11 349.12 L771.18 347.63 L766.17 346.27 L761.08 345.06 L755.92 343.99 L750.70 343.06 L745.43 342.28 L740.11 341.65 L734.76 341.17 L729.38 340.83 L723.99 340.65 L718.58 340.62 L713.18 340.73 L707.78 341.00 L702.41 341.42 L697.06 341.98 L691.74 342.70 L686.47 343.56 L681.25 344.56 L676.10 345.71 L673.19 344.90 L670.30 344.05 L667.43 343.17 L664.59 342.26 L661.76 341.32 L658.96 340.35 L656.18 339.35 L653.42 338.32 L650.69 337.26 L647.98 336.17 L645.30 335.05 L642.64 333.90 L640.01 332.72 L637.41 331.52 L634.84 330.28 L632.30 329.02 L629.78 327.74 L627.30 326.42 L624.84 325.08 L622.42 323.71 L620.03 322.32 L617.68 320.90 L615.35 319.45 L613.06 317.98 L610.81 316.48 L608.59 314.96 L606.40 313.42 L604.25 311.85 L602.14 310.26 L600.06 308.65 L598.02 307.01 L596.02 305.36 L594.06 303.68 L592.14 301.98 L590.25 300.25 L588.41 298.51 L586.60 296.75 L584.84 294.97 L583.12 293.17 L581.44 291.35 L579.80 289.52 L578.21 287.66 L576.65 285.79 L575.14 283.90 L573.68 282.00 L572.26 280.08 L570.88 278.14 L569.55 276.19 L568.26 274.23 L567.02 272.25 L565.82 270.25 L564.67 268.25 L563.57 266.23 L562.51 264.20 L561.50 262.16 L560.53 260.11 L559.62 258.05 L558.75 255.97 L557.92 253.89 L557.15 251.80 L556.42 249.70 L555.75 247.59 L555.12 245.48 L554.54 243.36 L554.00 241.23 L553.52 239.10 L553.09 236.96 L552.70 234.81 L552.37 232.67 L552.08 230.51 L551.84 228.36 L551.65 226.20 L551.51 224.04 L551.43 221.88 L551.39 219.72 L551.39 217.56 L551.45 215.40 L551.56 213.23 Z M575.48 138.43 L575.41 135.90 L575.22 133.38 L574.89 130.87 L574.44 128.36 L573.85 125.87 L573.15 123.39 L572.31 120.94 L571.35 118.50 L570.26 116.09 L569.05 113.71 L567.72 111.37 L566.28 109.05 L564.71 106.77 L563.02 104.54 L561.23 102.34 L559.32 100.19 L557.30 98.09 L555.17 96.04 L552.94 94.05 L550.61 92.10 L548.18 90.22 L545.65 88.40 L543.03 86.64 L540.32 84.94 L537.53 83.31 L534.65 81.75 L531.69 80.26 L528.66 78.85 L525.55 77.50 L522.38 76.24 L519.15 75.05 L515.85 73.94 L512.50 72.91 L509.10 71.96 L505.65 71.09 L502.15 70.31 L498.62 69.62 L495.05 69.01 L491.45 68.48 L487.83 68.05 L484.18 67.70 L480.52 67.44 L476.84 67.26 L473.16 67.18 L469.47 67.18 L465.79 67.28 L462.11 67.46 L458.44 67.73 L454.79 68.09 L451.15 68.53 L447.54 69.06 L443.96 69.68 L440.41 70.39 L436.89 71.18 L433.42 72.05 L429.99 73.01 L426.62 74.05 L423.29 75.16 L420.03 76.36 L416.83 77.63 L413.69 78.98 L410.63 80.41 L407.63 81.91 L404.72 83.47 L401.88 85.11 L399.13 86.81 L396.47 88.58 L393.90 90.41 L391.42 92.30 L389.05 94.24 L386.77 96.25 L384.59 98.30 L382.52 100.41 L380.56 102.56 L378.71 104.76 L376.97 107.00 L375.35 109.28 L373.84 111.60 L372.46 113.95 L371.19 116.33 L370.05 118.75 L369.03 121.18 L368.13 123.64 L367.36 126.12 L366.72 128.61 L366.21 131.12 L365.82 133.63 L365.56 136.16 L365.44 138.68 L365.44 141.21 L365.57 143.74 L365.83 146.26 L366.22 148.77 L366.74 151.27 L367.38 153.75 L368.16 156.22 L369.05 158.66 L370.08 161.09 L371.23 163.48 L372.50 165.84 L373.89 168.18 L375.39 170.47 L377.02 172.73 L378.76 174.95 L380.62 177.12 L382.58 179.24 L384.65 181.32 L386.83 183.34 L389.11 185.31 L391.50 187.23 L393.98 189.08 L396.55 190.87 L399.21 192.60 L401.97 194.26 L404.80 195.86 L407.72 197.38 L410.72 198.84 L413.78 200.22 L416.92 201.52 L420.13 202.75 L423.39 203.90 L426.72 204.97 L430.10 205.96 L433.52 206.86 L437.00 207.69 L440.51 208.43 L444.06 209.08 L447.65 209.65 L451.26 210.13 L454.89 210.52 L458.55 210.83 L462.22 211.04 L465.90 211.17 L469.58 211.21 L473.27 211.16 L476.95 211.02 L480.63 210.80 L484.29 210.48 L487.93 210.08 L491.56 209.59 L495.16 209.02 L498.72 208.35 L502.26 207.61 L505.75 206.78 L509.20 205.86 L512.60 204.86 L515.95 203.79 L519.24 202.63 L522.48 201.39 L525.65 200.08 L528.75 198.69 L531.78 197.23 L534.73 195.70 L537.61 194.10 L540.40 192.43 L543.11 190.69 L545.73 188.90 L548.25 187.04 L550.68 185.12 L553.01 183.14 L555.23 181.11 L557.36 179.03 L559.37 176.90 L561.28 174.72 L563.08 172.50 L564.76 170.24 L566.32 167.94 L567.77 165.61 L569.09 163.24 L570.30 160.84 L571.38 158.42 L572.34 155.97 L573.17 153.50 L573.87 151.02 L574.45 148.52 L574.90 146.00 L575.22 143.48 L575.42 140.96 Z M327.64 434.84 L327.57 432.31 L327.38 429.79 L327.05 427.27 L326.60 424.77 L326.02 422.28 L325.31 419.80 L324.47 417.34 L323.51 414.91 L322.42 412.50 L321.22 410.12 L319.89 407.77 L318.44 405.46 L316.87 403.18 L315.18 400.95 L313.39 398.75 L311.48 396.60 L309.46 394.50 L307.33 392.45 L305.10 390.45 L302.77 388.51 L300.34 386.63 L297.81 384.80 L295.19 383.04 L292.48 381.35 L289.69 379.72 L286.81 378.16 L283.85 376.67 L280.82 375.25 L277.72 373.91 L274.54 372.64 L271.31 371.45 L268.01 370.35 L264.66 369.32 L261.26 368.37 L257.81 367.50 L254.31 366.72 L250.78 366.03 L247.21 365.41 L243.61 364.89 L239.99 364.45 L236.34 364.10 L232.68 363.84 L229.00 363.67 L225.32 363.59 L221.63 363.59 L217.95 363.68 L214.27 363.87 L210.60 364.14 L206.95 364.49 L203.31 364.94 L199.70 365.47 L196.12 366.09 L192.57 366.80 L189.05 367.59 L185.58 368.46 L182.15 369.42 L178.78 370.45 L175.46 371.57 L172.19 372.77 L168.99 374.04 L165.85 375.39 L162.79 376.82 L159.79 378.31 L156.88 379.88 L154.04 381.52 L151.29 383.22 L148.63 384.99 L146.06 386.81 L143.58 388.70 L141.21 390.65 L138.93 392.65 L136.75 394.71 L134.68 396.82 L132.72 398.97 L130.87 401.17 L129.13 403.41 L127.51 405.69 L126.00 408.01 L124.62 410.36 L123.35 412.74 L122.21 415.15 L121.19 417.59 L120.29 420.05 L119.52 422.53 L118.88 425.02 L118.37 427.53 L117.98 430.04 L117.73 432.57 L117.60 435.09 L117.60 437.62 L117.73 440.15 L117.99 442.67 L118.38 445.18 L118.90 447.68 L119.54 450.16 L120.32 452.63 L121.22 455.07 L122.24 457.49 L123.39 459.89 L124.66 462.25 L126.05 464.58 L127.55 466.88 L129.18 469.14 L130.92 471.35 L132.78 473.52 L134.74 475.65 L136.81 477.73 L138.99 479.75 L141.28 481.72 L143.66 483.63 L146.14 485.49 L148.71 487.28 L151.37 489.01 L154.13 490.67 L156.96 492.26 L159.88 493.79 L162.88 495.24 L165.95 496.62 L169.08 497.93 L172.29 499.16 L175.55 500.31 L178.88 501.38 L182.26 502.36 L185.68 503.27 L189.16 504.09 L192.67 504.83 L196.22 505.49 L199.81 506.05 L203.42 506.53 L207.05 506.93 L210.71 507.23 L214.38 507.45 L218.06 507.58 L221.74 507.62 L225.43 507.57 L229.11 507.43 L232.79 507.21 L236.45 506.89 L240.10 506.49 L243.72 506.00 L247.32 505.42 L250.88 504.76 L254.42 504.01 L257.91 503.18 L261.36 502.27 L264.76 501.27 L268.11 500.19 L271.41 499.04 L274.64 497.80 L277.81 496.49 L280.91 495.10 L283.94 493.64 L286.90 492.11 L289.77 490.51 L292.56 488.84 L295.27 487.10 L297.89 485.30 L300.41 483.44 L302.84 481.52 L305.17 479.55 L307.40 477.52 L309.52 475.44 L311.53 473.31 L313.44 471.13 L315.24 468.91 L316.92 466.65 L318.48 464.35 L319.93 462.02 L321.25 459.65 L322.46 457.25 L323.54 454.83 L324.50 452.38 L325.33 449.91 L326.03 447.43 L326.61 444.92 L327.06 442.41 L327.38 439.89 L327.58 437.37 Z M823.77 431.25 L823.70 428.73 L823.50 426.20 L823.18 423.69 L822.73 421.18 L822.14 418.69 L821.44 416.21 L820.60 413.76 L819.64 411.32 L818.55 408.92 L817.34 406.54 L816.01 404.19 L814.56 401.87 L813.00 399.60 L811.31 397.36 L809.51 395.17 L807.60 393.02 L805.59 390.92 L803.46 388.87 L801.23 386.87 L798.90 384.93 L796.46 383.04 L793.94 381.22 L791.32 379.46 L788.61 377.76 L785.81 376.13 L782.94 374.57 L779.98 373.08 L776.95 371.67 L773.84 370.33 L770.67 369.06 L767.44 367.87 L764.14 366.76 L760.79 365.73 L757.39 364.78 L753.93 363.92 L750.44 363.14 L746.91 362.44 L743.34 361.83 L739.74 361.31 L736.12 360.87 L732.47 360.52 L728.81 360.26 L725.13 360.08 L721.45 360.00 L717.76 360.00 L714.08 360.10 L710.40 360.28 L706.73 360.55 L703.07 360.91 L699.44 361.35 L695.83 361.89 L692.25 362.51 L688.70 363.21 L685.18 364.00 L681.71 364.87 L678.28 365.83 L674.91 366.87 L671.58 367.99 L668.32 369.18 L665.12 370.46 L661.98 371.81 L658.91 373.23 L655.92 374.73 L653.01 376.29 L650.17 377.93 L647.42 379.63 L644.76 381.40 L642.19 383.23 L639.71 385.12 L637.33 387.07 L635.06 389.07 L632.88 391.12 L630.81 393.23 L628.85 395.38 L627.00 397.58 L625.26 399.82 L623.64 402.10 L622.13 404.42 L620.74 406.77 L619.48 409.16 L618.34 411.57 L617.32 414.00 L616.42 416.46 L615.65 418.94 L615.01 421.43 L614.50 423.94 L614.11 426.46 L613.85 428.98 L613.73 431.51 L613.73 434.04 L613.86 436.56 L614.12 439.08 L614.51 441.59 L615.03 444.09 L615.67 446.57 L616.45 449.04 L617.34 451.49 L618.37 453.91 L619.51 456.30 L620.78 458.67 L622.17 461.00 L623.68 463.29 L625.31 465.55 L627.05 467.77 L628.91 469.94 L630.87 472.06 L632.94 474.14 L635.12 476.16 L637.40 478.13 L639.79 480.05 L642.27 481.90 L644.84 483.69 L647.50 485.42 L650.26 487.08 L653.09 488.68 L656.01 490.20 L659.01 491.66 L662.07 493.04 L665.21 494.34 L668.42 495.57 L671.68 496.72 L675.01 497.79 L678.38 498.78 L681.81 499.69 L685.29 500.51 L688.80 501.25 L692.35 501.90 L695.94 502.47 L699.55 502.95 L703.18 503.34 L706.84 503.65 L710.51 503.86 L714.19 503.99 L717.87 504.03 L721.56 503.98 L725.24 503.85 L728.92 503.62 L732.58 503.31 L736.22 502.90 L739.85 502.42 L743.45 501.84 L747.01 501.18 L750.55 500.43 L754.04 499.60 L757.49 498.68 L760.89 497.69 L764.24 496.61 L767.53 495.45 L770.77 494.21 L773.94 492.90 L777.04 491.52 L780.07 490.05 L783.02 488.52 L785.90 486.92 L788.69 485.25 L791.40 483.52 L794.01 481.72 L796.54 479.86 L798.97 477.94 L801.30 475.96 L803.52 473.93 L805.65 471.85 L807.66 469.72 L809.57 467.55 L811.36 465.33 L813.05 463.07 L814.61 460.77 L816.06 458.43 L817.38 456.06 L818.59 453.67 L819.67 451.24 L820.63 448.79 L821.46 446.33 L822.16 443.84 L822.74 441.34 L823.19 438.83 L823.51 436.31 L823.70 433.78 Z" fill="#666458" fill-rule="evenodd" stroke="#1d1c19" stroke-width="1.25" stroke-linejoin="round"/><g clip-path="url(#ch0)"><path d="M0 0H1018V623H0Z M575.48 186.94 L575.41 184.41 L575.22 181.89 L574.89 179.38 L574.44 176.87 L573.85 174.38 L573.15 171.90 L572.31 169.45 L571.35 167.01 L570.26 164.60 L569.05 162.22 L567.72 159.88 L566.28 157.56 L564.71 155.28 L563.02 153.05 L561.23 150.85 L559.32 148.70 L557.30 146.60 L555.17 144.55 L552.94 142.56 L550.61 140.61 L548.18 138.73 L545.65 136.91 L543.03 135.15 L540.32 133.45 L537.53 131.82 L534.65 130.26 L531.69 128.77 L528.66 127.36 L525.55 126.01 L522.38 124.75 L519.15 123.56 L515.85 122.45 L512.50 121.42 L509.10 120.47 L505.65 119.60 L502.15 118.82 L498.62 118.13 L495.05 117.52 L491.45 116.99 L487.83 116.56 L484.18 116.21 L480.52 115.95 L476.84 115.77 L473.16 115.69 L469.47 115.69 L465.79 115.79 L462.11 115.97 L458.44 116.24 L454.79 116.60 L451.15 117.04 L447.54 117.57 L443.96 118.19 L440.41 118.90 L436.89 119.69 L433.42 120.56 L429.99 121.52 L426.62 122.56 L423.29 123.67 L420.03 124.87 L416.83 126.14 L413.69 127.49 L410.63 128.92 L407.63 130.42 L404.72 131.98 L401.88 133.62 L399.13 135.32 L396.47 137.09 L393.90 138.92 L391.42 140.81 L389.05 142.75 L386.77 144.76 L384.59 146.81 L382.52 148.92 L380.56 151.07 L378.71 153.27 L376.97 155.51 L375.35 157.79 L373.84 160.11 L372.46 162.46 L371.19 164.84 L370.05 167.26 L369.03 169.69 L368.13 172.15 L367.36 174.63 L366.72 177.12 L366.21 179.63 L365.82 182.14 L365.56 184.67 L365.44 187.19 L365.44 189.72 L365.57 192.25 L365.83 194.77 L366.22 197.28 L366.74 199.78 L367.38 202.26 L368.16 204.73 L369.05 207.17 L370.08 209.60 L371.23 211.99 L372.50 214.35 L373.89 216.69 L375.39 218.98 L377.02 221.24 L378.76 223.46 L380.62 225.63 L382.58 227.75 L384.65 229.83 L386.83 231.85 L389.11 233.82 L391.50 235.74 L393.98 237.59 L396.55 239.38 L399.21 241.11 L401.97 242.77 L404.80 244.37 L407.72 245.89 L410.72 247.35 L413.78 248.73 L416.92 250.03 L420.13 251.26 L423.39 252.41 L426.72 253.48 L430.10 254.47 L433.52 255.37 L437.00 256.20 L440.51 256.94 L444.06 257.59 L447.65 258.16 L451.26 258.64 L454.89 259.03 L458.55 259.34 L462.22 259.55 L465.90 259.68 L469.58 259.72 L473.27 259.67 L476.95 259.53 L480.63 259.31 L484.29 258.99 L487.93 258.59 L491.56 258.10 L495.16 257.53 L498.72 256.86 L502.26 256.12 L505.75 255.29 L509.20 254.37 L512.60 253.37 L515.95 252.30 L519.24 251.14 L522.48 249.90 L525.65 248.59 L528.75 247.20 L531.78 245.74 L534.73 244.21 L537.61 242.61 L540.40 240.94 L543.11 239.20 L545.73 237.41 L548.25 235.55 L550.68 233.63 L553.01 231.65 L555.23 229.62 L557.36 227.54 L559.37 225.41 L561.28 223.23 L563.08 221.01 L564.76 218.75 L566.32 216.45 L567.77 214.12 L569.09 211.75 L570.30 209.35 L571.38 206.93 L572.34 204.48 L573.17 202.01 L573.87 199.53 L574.45 197.03 L574.90 194.51 L575.22 191.99 L575.42 189.47 Z" fill="url(#gTi)" fill-rule="evenodd" stroke="#1d1c19" stroke-width="1.25"/></g><path d="M575.48 138.43 L575.41 135.90 L575.22 133.38 L574.89 130.87 L574.44 128.36 L573.85 125.87 L573.15 123.39 L572.31 120.94 L571.35 118.50 L570.26 116.09 L569.05 113.71 L567.72 111.37 L566.28 109.05 L564.71 106.77 L563.02 104.54 L561.23 102.34 L559.32 100.19 L557.30 98.09 L555.17 96.04 L552.94 94.05 L550.61 92.10 L548.18 90.22 L545.65 88.40 L543.03 86.64 L540.32 84.94 L537.53 83.31 L534.65 81.75 L531.69 80.26 L528.66 78.85 L525.55 77.50 L522.38 76.24 L519.15 75.05 L515.85 73.94 L512.50 72.91 L509.10 71.96 L505.65 71.09 L502.15 70.31 L498.62 69.62 L495.05 69.01 L491.45 68.48 L487.83 68.05 L484.18 67.70 L480.52 67.44 L476.84 67.26 L473.16 67.18 L469.47 67.18 L465.79 67.28 L462.11 67.46 L458.44 67.73 L454.79 68.09 L451.15 68.53 L447.54 69.06 L443.96 69.68 L440.41 70.39 L436.89 71.18 L433.42 72.05 L429.99 73.01 L426.62 74.05 L423.29 75.16 L420.03 76.36 L416.83 77.63 L413.69 78.98 L410.63 80.41 L407.63 81.91 L404.72 83.47 L401.88 85.11 L399.13 86.81 L396.47 88.58 L393.90 90.41 L391.42 92.30 L389.05 94.24 L386.77 96.25 L384.59 98.30 L382.52 100.41 L380.56 102.56 L378.71 104.76 L376.97 107.00 L375.35 109.28 L373.84 111.60 L372.46 113.95 L371.19 116.33 L370.05 118.75 L369.03 121.18 L368.13 123.64 L367.36 126.12 L366.72 128.61 L366.21 131.12 L365.82 133.63 L365.56 136.16 L365.44 138.68 L365.44 141.21 L365.57 143.74 L365.83 146.26 L366.22 148.77 L366.74 151.27 L367.38 153.75 L368.16 156.22 L369.05 158.66 L370.08 161.09 L371.23 163.48 L372.50 165.84 L373.89 168.18 L375.39 170.47 L377.02 172.73 L378.76 174.95 L380.62 177.12 L382.58 179.24 L384.65 181.32 L386.83 183.34 L389.11 185.31 L391.50 187.23 L393.98 189.08 L396.55 190.87 L399.21 192.60 L401.97 194.26 L404.80 195.86 L407.72 197.38 L410.72 198.84 L413.78 200.22 L416.92 201.52 L420.13 202.75 L423.39 203.90 L426.72 204.97 L430.10 205.96 L433.52 206.86 L437.00 207.69 L440.51 208.43 L444.06 209.08 L447.65 209.65 L451.26 210.13 L454.89 210.52 L458.55 210.83 L462.22 211.04 L465.90 211.17 L469.58 211.21 L473.27 211.16 L476.95 211.02 L480.63 210.80 L484.29 210.48 L487.93 210.08 L491.56 209.59 L495.16 209.02 L498.72 208.35 L502.26 207.61 L505.75 206.78 L509.20 205.86 L512.60 204.86 L515.95 203.79 L519.24 202.63 L522.48 201.39 L525.65 200.08 L528.75 198.69 L531.78 197.23 L534.73 195.70 L537.61 194.10 L540.40 192.43 L543.11 190.69 L545.73 188.90 L548.25 187.04 L550.68 185.12 L553.01 183.14 L555.23 181.11 L557.36 179.03 L559.37 176.90 L561.28 174.72 L563.08 172.50 L564.76 170.24 L566.32 167.94 L567.77 165.61 L569.09 163.24 L570.30 160.84 L571.38 158.42 L572.34 155.97 L573.17 153.50 L573.87 151.02 L574.45 148.52 L574.90 146.00 L575.22 143.48 L575.42 140.96 Z" fill="none" stroke="#1d1c19" stroke-width="1.25"/><g clip-path="url(#ch1)"><path d="M0 0H1018V623H0Z M327.64 483.35 L327.57 480.82 L327.38 478.30 L327.05 475.78 L326.60 473.28 L326.02 470.79 L325.31 468.31 L324.47 465.85 L323.51 463.42 L322.42 461.01 L321.22 458.63 L319.89 456.28 L318.44 453.97 L316.87 451.69 L315.18 449.46 L313.39 447.26 L311.48 445.11 L309.46 443.01 L307.33 440.96 L305.10 438.96 L302.77 437.02 L300.34 435.14 L297.81 433.31 L295.19 431.55 L292.48 429.86 L289.69 428.23 L286.81 426.67 L283.85 425.18 L280.82 423.76 L277.72 422.42 L274.54 421.15 L271.31 419.96 L268.01 418.86 L264.66 417.83 L261.26 416.88 L257.81 416.01 L254.31 415.23 L250.78 414.54 L247.21 413.92 L243.61 413.40 L239.99 412.96 L236.34 412.61 L232.68 412.35 L229.00 412.18 L225.32 412.10 L221.63 412.10 L217.95 412.19 L214.27 412.38 L210.60 412.65 L206.95 413.00 L203.31 413.45 L199.70 413.98 L196.12 414.60 L192.57 415.31 L189.05 416.10 L185.58 416.97 L182.15 417.93 L178.78 418.96 L175.46 420.08 L172.19 421.28 L168.99 422.55 L165.85 423.90 L162.79 425.33 L159.79 426.82 L156.88 428.39 L154.04 430.03 L151.29 431.73 L148.63 433.50 L146.06 435.32 L143.58 437.21 L141.21 439.16 L138.93 441.16 L136.75 443.22 L134.68 445.33 L132.72 447.48 L130.87 449.68 L129.13 451.92 L127.51 454.20 L126.00 456.52 L124.62 458.87 L123.35 461.25 L122.21 463.66 L121.19 466.10 L120.29 468.56 L119.52 471.04 L118.88 473.53 L118.37 476.04 L117.98 478.55 L117.73 481.08 L117.60 483.60 L117.60 486.13 L117.73 488.66 L117.99 491.18 L118.38 493.69 L118.90 496.19 L119.54 498.67 L120.32 501.14 L121.22 503.58 L122.24 506.00 L123.39 508.40 L124.66 510.76 L126.05 513.09 L127.55 515.39 L129.18 517.65 L130.92 519.86 L132.78 522.03 L134.74 524.16 L136.81 526.24 L138.99 528.26 L141.28 530.23 L143.66 532.14 L146.14 534.00 L148.71 535.79 L151.37 537.52 L154.13 539.18 L156.96 540.77 L159.88 542.30 L162.88 543.75 L165.95 545.13 L169.08 546.44 L172.29 547.67 L175.55 548.82 L178.88 549.89 L182.26 550.87 L185.68 551.78 L189.16 552.60 L192.67 553.34 L196.22 554.00 L199.81 554.56 L203.42 555.04 L207.05 555.44 L210.71 555.74 L214.38 555.96 L218.06 556.09 L221.74 556.13 L225.43 556.08 L229.11 555.94 L232.79 555.72 L236.45 555.40 L240.10 555.00 L243.72 554.51 L247.32 553.93 L250.88 553.27 L254.42 552.52 L257.91 551.69 L261.36 550.78 L264.76 549.78 L268.11 548.70 L271.41 547.55 L274.64 546.31 L277.81 545.00 L280.91 543.61 L283.94 542.15 L286.90 540.62 L289.77 539.02 L292.56 537.35 L295.27 535.61 L297.89 533.81 L300.41 531.95 L302.84 530.03 L305.17 528.06 L307.40 526.03 L309.52 523.95 L311.53 521.82 L313.44 519.64 L315.24 517.42 L316.92 515.16 L318.48 512.86 L319.93 510.53 L321.25 508.16 L322.46 505.76 L323.54 503.34 L324.50 500.89 L325.33 498.42 L326.03 495.94 L326.61 493.43 L327.06 490.92 L327.38 488.40 L327.58 485.88 Z" fill="url(#gLi)" fill-rule="evenodd" stroke="#1d1c19" stroke-width="1.25"/></g><path d="M327.64 434.84 L327.57 432.31 L327.38 429.79 L327.05 427.27 L326.60 424.77 L326.02 422.28 L325.31 419.80 L324.47 417.34 L323.51 414.91 L322.42 412.50 L321.22 410.12 L319.89 407.77 L318.44 405.46 L316.87 403.18 L315.18 400.95 L313.39 398.75 L311.48 396.60 L309.46 394.50 L307.33 392.45 L305.10 390.45 L302.77 388.51 L300.34 386.63 L297.81 384.80 L295.19 383.04 L292.48 381.35 L289.69 379.72 L286.81 378.16 L283.85 376.67 L280.82 375.25 L277.72 373.91 L274.54 372.64 L271.31 371.45 L268.01 370.35 L264.66 369.32 L261.26 368.37 L257.81 367.50 L254.31 366.72 L250.78 366.03 L247.21 365.41 L243.61 364.89 L239.99 364.45 L236.34 364.10 L232.68 363.84 L229.00 363.67 L225.32 363.59 L221.63 363.59 L217.95 363.68 L214.27 363.87 L210.60 364.14 L206.95 364.49 L203.31 364.94 L199.70 365.47 L196.12 366.09 L192.57 366.80 L189.05 367.59 L185.58 368.46 L182.15 369.42 L178.78 370.45 L175.46 371.57 L172.19 372.77 L168.99 374.04 L165.85 375.39 L162.79 376.82 L159.79 378.31 L156.88 379.88 L154.04 381.52 L151.29 383.22 L148.63 384.99 L146.06 386.81 L143.58 388.70 L141.21 390.65 L138.93 392.65 L136.75 394.71 L134.68 396.82 L132.72 398.97 L130.87 401.17 L129.13 403.41 L127.51 405.69 L126.00 408.01 L124.62 410.36 L123.35 412.74 L122.21 415.15 L121.19 417.59 L120.29 420.05 L119.52 422.53 L118.88 425.02 L118.37 427.53 L117.98 430.04 L117.73 432.57 L117.60 435.09 L117.60 437.62 L117.73 440.15 L117.99 442.67 L118.38 445.18 L118.90 447.68 L119.54 450.16 L120.32 452.63 L121.22 455.07 L122.24 457.49 L123.39 459.89 L124.66 462.25 L126.05 464.58 L127.55 466.88 L129.18 469.14 L130.92 471.35 L132.78 473.52 L134.74 475.65 L136.81 477.73 L138.99 479.75 L141.28 481.72 L143.66 483.63 L146.14 485.49 L148.71 487.28 L151.37 489.01 L154.13 490.67 L156.96 492.26 L159.88 493.79 L162.88 495.24 L165.95 496.62 L169.08 497.93 L172.29 499.16 L175.55 500.31 L178.88 501.38 L182.26 502.36 L185.68 503.27 L189.16 504.09 L192.67 504.83 L196.22 505.49 L199.81 506.05 L203.42 506.53 L207.05 506.93 L210.71 507.23 L214.38 507.45 L218.06 507.58 L221.74 507.62 L225.43 507.57 L229.11 507.43 L232.79 507.21 L236.45 506.89 L240.10 506.49 L243.72 506.00 L247.32 505.42 L250.88 504.76 L254.42 504.01 L257.91 503.18 L261.36 502.27 L264.76 501.27 L268.11 500.19 L271.41 499.04 L274.64 497.80 L277.81 496.49 L280.91 495.10 L283.94 493.64 L286.90 492.11 L289.77 490.51 L292.56 488.84 L295.27 487.10 L297.89 485.30 L300.41 483.44 L302.84 481.52 L305.17 479.55 L307.40 477.52 L309.52 475.44 L311.53 473.31 L313.44 471.13 L315.24 468.91 L316.92 466.65 L318.48 464.35 L319.93 462.02 L321.25 459.65 L322.46 457.25 L323.54 454.83 L324.50 452.38 L325.33 449.91 L326.03 447.43 L326.61 444.92 L327.06 442.41 L327.38 439.89 L327.58 437.37 Z" fill="none" stroke="#1d1c19" stroke-width="1.25"/><g clip-path="url(#ch2)"><path d="M0 0H1018V623H0Z M823.77 479.76 L823.70 477.24 L823.50 474.71 L823.18 472.20 L822.73 469.69 L822.14 467.20 L821.44 464.72 L820.60 462.27 L819.64 459.83 L818.55 457.43 L817.34 455.05 L816.01 452.70 L814.56 450.38 L813.00 448.11 L811.31 445.87 L809.51 443.68 L807.60 441.53 L805.59 439.43 L803.46 437.38 L801.23 435.38 L798.90 433.44 L796.46 431.55 L793.94 429.73 L791.32 427.97 L788.61 426.27 L785.81 424.64 L782.94 423.08 L779.98 421.59 L776.95 420.18 L773.84 418.84 L770.67 417.57 L767.44 416.38 L764.14 415.27 L760.79 414.24 L757.39 413.29 L753.93 412.43 L750.44 411.65 L746.91 410.95 L743.34 410.34 L739.74 409.82 L736.12 409.38 L732.47 409.03 L728.81 408.77 L725.13 408.59 L721.45 408.51 L717.76 408.51 L714.08 408.61 L710.40 408.79 L706.73 409.06 L703.07 409.42 L699.44 409.86 L695.83 410.40 L692.25 411.02 L688.70 411.72 L685.18 412.51 L681.71 413.38 L678.28 414.34 L674.91 415.38 L671.58 416.50 L668.32 417.69 L665.12 418.97 L661.98 420.32 L658.91 421.74 L655.92 423.24 L653.01 424.80 L650.17 426.44 L647.42 428.14 L644.76 429.91 L642.19 431.74 L639.71 433.63 L637.33 435.58 L635.06 437.58 L632.88 439.63 L630.81 441.74 L628.85 443.89 L627.00 446.09 L625.26 448.33 L623.64 450.61 L622.13 452.93 L620.74 455.28 L619.48 457.67 L618.34 460.08 L617.32 462.51 L616.42 464.97 L615.65 467.45 L615.01 469.94 L614.50 472.45 L614.11 474.97 L613.85 477.49 L613.73 480.02 L613.73 482.55 L613.86 485.07 L614.12 487.59 L614.51 490.10 L615.03 492.60 L615.67 495.08 L616.45 497.55 L617.34 500.00 L618.37 502.42 L619.51 504.81 L620.78 507.18 L622.17 509.51 L623.68 511.80 L625.31 514.06 L627.05 516.28 L628.91 518.45 L630.87 520.57 L632.94 522.65 L635.12 524.67 L637.40 526.64 L639.79 528.56 L642.27 530.41 L644.84 532.20 L647.50 533.93 L650.26 535.59 L653.09 537.19 L656.01 538.71 L659.01 540.17 L662.07 541.55 L665.21 542.85 L668.42 544.08 L671.68 545.23 L675.01 546.30 L678.38 547.29 L681.81 548.20 L685.29 549.02 L688.80 549.76 L692.35 550.41 L695.94 550.98 L699.55 551.46 L703.18 551.85 L706.84 552.16 L710.51 552.37 L714.19 552.50 L717.87 552.54 L721.56 552.49 L725.24 552.36 L728.92 552.13 L732.58 551.82 L736.22 551.41 L739.85 550.93 L743.45 550.35 L747.01 549.69 L750.55 548.94 L754.04 548.11 L757.49 547.19 L760.89 546.20 L764.24 545.12 L767.53 543.96 L770.77 542.72 L773.94 541.41 L777.04 540.03 L780.07 538.56 L783.02 537.03 L785.90 535.43 L788.69 533.76 L791.40 532.03 L794.01 530.23 L796.54 528.37 L798.97 526.45 L801.30 524.47 L803.52 522.44 L805.65 520.36 L807.66 518.23 L809.57 516.06 L811.36 513.84 L813.05 511.58 L814.61 509.28 L816.06 506.94 L817.38 504.57 L818.59 502.18 L819.67 499.75 L820.63 497.30 L821.46 494.84 L822.16 492.35 L822.74 489.85 L823.19 487.34 L823.51 484.82 L823.70 482.29 Z" fill="url(#gRi)" fill-rule="evenodd" stroke="#1d1c19" stroke-width="1.25"/></g><path d="M823.77 431.25 L823.70 428.73 L823.50 426.20 L823.18 423.69 L822.73 421.18 L822.14 418.69 L821.44 416.21 L820.60 413.76 L819.64 411.32 L818.55 408.92 L817.34 406.54 L816.01 404.19 L814.56 401.87 L813.00 399.60 L811.31 397.36 L809.51 395.17 L807.60 393.02 L805.59 390.92 L803.46 388.87 L801.23 386.87 L798.90 384.93 L796.46 383.04 L793.94 381.22 L791.32 379.46 L788.61 377.76 L785.81 376.13 L782.94 374.57 L779.98 373.08 L776.95 371.67 L773.84 370.33 L770.67 369.06 L767.44 367.87 L764.14 366.76 L760.79 365.73 L757.39 364.78 L753.93 363.92 L750.44 363.14 L746.91 362.44 L743.34 361.83 L739.74 361.31 L736.12 360.87 L732.47 360.52 L728.81 360.26 L725.13 360.08 L721.45 360.00 L717.76 360.00 L714.08 360.10 L710.40 360.28 L706.73 360.55 L703.07 360.91 L699.44 361.35 L695.83 361.89 L692.25 362.51 L688.70 363.21 L685.18 364.00 L681.71 364.87 L678.28 365.83 L674.91 366.87 L671.58 367.99 L668.32 369.18 L665.12 370.46 L661.98 371.81 L658.91 373.23 L655.92 374.73 L653.01 376.29 L650.17 377.93 L647.42 379.63 L644.76 381.40 L642.19 383.23 L639.71 385.12 L637.33 387.07 L635.06 389.07 L632.88 391.12 L630.81 393.23 L628.85 395.38 L627.00 397.58 L625.26 399.82 L623.64 402.10 L622.13 404.42 L620.74 406.77 L619.48 409.16 L618.34 411.57 L617.32 414.00 L616.42 416.46 L615.65 418.94 L615.01 421.43 L614.50 423.94 L614.11 426.46 L613.85 428.98 L613.73 431.51 L613.73 434.04 L613.86 436.56 L614.12 439.08 L614.51 441.59 L615.03 444.09 L615.67 446.57 L616.45 449.04 L617.34 451.49 L618.37 453.91 L619.51 456.30 L620.78 458.67 L622.17 461.00 L623.68 463.29 L625.31 465.55 L627.05 467.77 L628.91 469.94 L630.87 472.06 L632.94 474.14 L635.12 476.16 L637.40 478.13 L639.79 480.05 L642.27 481.90 L644.84 483.69 L647.50 485.42 L650.26 487.08 L653.09 488.68 L656.01 490.20 L659.01 491.66 L662.07 493.04 L665.21 494.34 L668.42 495.57 L671.68 496.72 L675.01 497.79 L678.38 498.78 L681.81 499.69 L685.29 500.51 L688.80 501.25 L692.35 501.90 L695.94 502.47 L699.55 502.95 L703.18 503.34 L706.84 503.65 L710.51 503.86 L714.19 503.99 L717.87 504.03 L721.56 503.98 L725.24 503.85 L728.92 503.62 L732.58 503.31 L736.22 502.90 L739.85 502.42 L743.45 501.84 L747.01 501.18 L750.55 500.43 L754.04 499.60 L757.49 498.68 L760.89 497.69 L764.24 496.61 L767.53 495.45 L770.77 494.21 L773.94 492.90 L777.04 491.52 L780.07 490.05 L783.02 488.52 L785.90 486.92 L788.69 485.25 L791.40 483.52 L794.01 481.72 L796.54 479.86 L798.97 477.94 L801.30 475.96 L803.52 473.93 L805.65 471.85 L807.66 469.72 L809.57 467.55 L811.36 465.33 L813.05 463.07 L814.61 460.77 L816.06 458.43 L817.38 456.06 L818.59 453.67 L819.67 451.24 L820.63 448.79 L821.46 446.33 L822.16 443.84 L822.74 441.34 L823.19 438.83 L823.51 436.31 L823.70 433.78 Z" fill="none" stroke="#1d1c19" stroke-width="1.25"/></g>
<defs><filter id="bl4" x="-50%" y="-50%" width="200%" height="200%"><feGaussianBlur stdDeviation="5"/></filter><clipPath id="cBot"><ellipse cx="471.00" cy="384.30" rx="38.4" ry="26.3"/></clipPath></defs>
<ellipse cx="470.80" cy="335.90" rx="105.20" ry="72.00" fill="none" stroke="#1f1e1b" stroke-width="1.25" />
<ellipse cx="470.80" cy="335.90" rx="104.20" ry="71.20" fill="none" stroke="#858277" stroke-width="0.90" opacity="0.6"/>
<ellipse cx="470.80" cy="335.90" rx="103.10" ry="70.30" fill="none" stroke="#1f1e1b" stroke-width="1.25" />
<defs><linearGradient id="gBand" x1="0" y1="0" x2="1" y2="0"><stop offset="0" stop-color="#66665f"/><stop offset="0.2" stop-color="#5a5a56"/><stop offset="0.5" stop-color="#666662"/><stop offset="0.8" stop-color="#5a5a56"/><stop offset="1" stop-color="#66665f"/></linearGradient><linearGradient id="gHole" x1="0" y1="0" x2="1" y2="0"><stop offset="0" stop-color="#7a7a72"/><stop offset="0.1" stop-color="#5e5e5a"/><stop offset="0.3" stop-color="#424241"/><stop offset="0.55" stop-color="#2f2f2f"/><stop offset="0.8" stop-color="#3f3f3e"/><stop offset="0.94" stop-color="#5c5c58"/><stop offset="1" stop-color="#6c6c66"/></linearGradient><linearGradient id="gRim" x1="0" y1="0" x2="1" y2="0"><stop offset="0" stop-color="#a3a195"/><stop offset="0.25" stop-color="#6a6963"/><stop offset="0.55" stop-color="#51504c"/><stop offset="0.85" stop-color="#7c7a71"/><stop offset="1" stop-color="#8f8d82"/></linearGradient><linearGradient id="gHoleV" x1="0" y1="0" x2="0" y2="1"><stop offset="0" stop-color="#777" stop-opacity="0.5"/><stop offset="0.45" stop-color="#000" stop-opacity="0"/><stop offset="1" stop-color="#000" stop-opacity="0.25"/></linearGradient><filter id="bl1" x="-20%" y="-20%" width="140%" height="140%"><feGaussianBlur stdDeviation="1.1"/></filter><clipPath id="cBand"><ellipse cx="470.50" cy="335.50" rx="78.2" ry="53.4"/></clipPath><clipPath id="cHole"><ellipse cx="471.00" cy="338.10" rx="38.4" ry="26.3"/></clipPath></defs>
<ellipse cx="470.50" cy="335.50" rx="78.20" ry="53.40" fill="url(#gBand)" stroke="#1b1b19" stroke-width="1.10" />
<g clip-path="url(#cBand)">
<ellipse cx="470.50" cy="334.90" rx="73.00" ry="49.60" fill="none" stroke="#9a9a95" stroke-width="2.40" filter="url(#bl1)" opacity="0.9"/>
<ellipse cx="470.50" cy="337.10" rx="69.50" ry="47.20" fill="none" stroke="#1a1a19" stroke-width="2.20" filter="url(#bl1)" opacity="0.7"/>
<path d="M532.1 316 Q543.6 328 548.0 344.3 L536.4 346 Q536.8 330 532.1 316Z" fill="#2c2c2b" stroke="#1b1b19" stroke-width="0.8"/>
<path d="M548.0 344.4 L536.4 346.2 L534.6 355.6 L542.8 356.4 Q546.4 351 548.0 344.4Z" fill="#a5a296" stroke="#1b1b19" stroke-width="0.8"/>
<path d="M545.1 349.5 L535.1 355.8 L542.8 356.4 Z" fill="#6d6c66" opacity="0.8"/>
<path d="M409.5 316 Q398.0 328 393.6 344.3 L405.2 346 Q404.8 330 409.5 316Z" fill="#2c2c2b" stroke="#1b1b19" stroke-width="0.8"/>
<path d="M393.6 344.4 L405.2 346.2 L407.0 355.6 L398.8 356.4 Q395.2 351 393.6 344.4Z" fill="#a5a296" stroke="#1b1b19" stroke-width="0.8"/>
<path d="M396.5 349.5 L406.5 355.8 L398.8 356.4 Z" fill="#6d6c66" opacity="0.8"/>
</g>
<ellipse cx="470.50" cy="336.10" rx="65.70" ry="44.60" fill="#666458" stroke="#1b1b19" stroke-width="1.10" />
<ellipse cx="470.90" cy="335.70" rx="41.80" ry="28.70" fill="url(#gRim)" stroke="#1b1b19" stroke-width="1.00" />
<ellipse cx="471.00" cy="338.10" rx="38.40" ry="26.30" fill="url(#gHole)" stroke="#1b1b19" stroke-width="1.00" />
<g clip-path="url(#cHole)">
<ellipse cx="471.00" cy="338.10" rx="38.40" ry="26.30" fill="url(#gHoleV)" stroke="none" stroke-width="1.00" />
<ellipse cx="471.00" cy="344.90" rx="26.00" ry="18.00" fill="#161616" stroke="none" stroke-width="1.00" filter="url(#bl4)" opacity="0.3"/>
<ellipse cx="471.00" cy="384.30" rx="38.40" ry="26.30" fill="#ececec" stroke="#1b1b19" stroke-width="1.00" />
<g clip-path="url(#cBot)">
<ellipse cx="471.00" cy="360.20" rx="19.50" ry="4.60" fill="#fafafa" stroke="#c9c9c9" stroke-width="0.80" />
<path d="M448 360.1L494 359.7" stroke="#e84848" stroke-width="1.1"/>
<path d="M471.1 353L471.2 366" stroke="#4a4ae0" stroke-width="1.3"/>
<rect x="466.5" y="357.2" width="9" height="5.6" fill="#bfbfbf" opacity="0.7"/>
<path d="M471.1 353L471.2 366" stroke="#4a4ae0" stroke-width="1.3"/>
</g></g>
<defs><clipPath id="cBody"><path d="M551.72 211.07 L556.06 208.65 L560.26 206.11 L564.29 203.45 L568.17 200.68 L571.87 197.80 L575.39 194.82 L578.73 191.74 L581.89 188.57 L584.84 185.32 L587.60 181.98 L590.16 178.57 L592.50 175.09 L594.63 171.54 L596.55 167.94 L598.24 164.29 L599.71 160.60 L600.96 156.87 L601.98 153.11 L602.76 149.32 L603.32 145.52 L603.65 141.70 L603.74 137.89 L603.60 134.07 L603.23 130.26 L602.62 126.47 L601.79 122.70 L600.72 118.96 L599.43 115.25 L597.91 111.59 L596.17 107.97 L594.21 104.41 L592.04 100.91 L589.65 97.47 L587.06 94.11 L584.26 90.83 L581.26 87.63 L578.07 84.52 L574.69 81.51 L571.13 78.60 L567.39 75.79 L563.48 73.10 L559.41 70.52 L555.19 68.06 L550.82 65.72 L546.30 63.52 L541.66 61.44 L536.89 59.50 L532.01 57.70 L527.01 56.04 L521.92 54.53 L516.74 53.16 L511.48 51.95 L506.14 50.89 L500.75 49.98 L495.30 49.23 L489.81 48.63 L484.28 48.19 L478.73 47.91 L473.16 47.79 L467.60 47.83 L462.03 48.03 L456.48 48.39 L450.96 48.91 L445.46 49.59 L440.02 50.42 L434.62 51.40 L429.29 52.54 L424.03 53.83 L418.85 55.27 L413.76 56.86 L408.77 58.59 L403.89 60.46 L399.12 62.47 L394.48 64.61 L389.97 66.89 L385.60 69.29 L381.38 71.81 L377.32 74.44 L373.42 77.20 L369.68 80.06 L366.13 83.02 L362.75 86.08 L359.56 89.24 L356.57 92.48 L353.78 95.80 L351.19 99.20 L348.80 102.67 L346.63 106.20 L344.68 109.79 L342.95 113.43 L341.43 117.12 L340.15 120.84 L339.09 124.60 L338.26 128.38 L337.66 132.18 L337.29 135.99 L337.16 139.81 L337.26 143.63 L337.59 147.44 L338.15 151.23 L338.95 155.01 L339.97 158.76 L341.22 162.47 L342.70 166.14 L344.40 169.77 L346.32 173.34 L348.46 176.85 L350.81 180.30 L353.36 183.67 L356.13 186.97 L359.09 190.18 L362.25 193.31 L365.59 196.34 L369.12 199.27 L372.83 202.09 L376.71 204.81 L380.75 207.41 L384.94 209.89 L389.29 212.25 L389.45 214.41 L389.56 216.57 L389.63 218.73 L389.64 220.89 L389.60 223.05 L389.52 225.21 L389.38 227.38 L389.20 229.54 L388.96 231.69 L388.68 233.85 L388.35 236.00 L387.96 238.15 L387.53 240.30 L387.05 242.44 L386.52 244.57 L385.95 246.70 L385.32 248.83 L384.65 250.94 L383.92 253.05 L383.15 255.15 L382.33 257.25 L381.47 259.33 L380.55 261.41 L379.59 263.47 L378.58 265.53 L377.53 267.58 L376.43 269.61 L375.28 271.63 L374.09 273.64 L372.85 275.64 L371.56 277.62 L370.23 279.59 L368.86 281.55 L367.44 283.49 L365.98 285.41 L364.47 287.32 L362.92 289.22 L361.33 291.09 L359.69 292.96 L358.02 294.80 L356.30 296.62 L354.54 298.43 L352.74 300.22 L350.90 301.98 L349.01 303.73 L347.09 305.46 L345.13 307.17 L343.14 308.86 L341.10 310.52 L339.03 312.16 L336.92 313.78 L334.77 315.38 L332.58 316.96 L330.37 318.51 L328.11 320.04 L325.82 321.54 L323.50 323.02 L321.15 324.48 L318.76 325.90 L316.34 327.31 L313.89 328.69 L311.41 330.04 L308.90 331.36 L306.35 332.66 L303.78 333.93 L301.18 335.17 L298.56 336.39 L295.90 337.57 L293.22 338.73 L290.52 339.86 L287.79 340.96 L285.03 342.03 L282.25 343.07 L279.45 344.08 L276.63 345.06 L273.78 346.01 L270.91 346.93 L268.03 347.82 L265.12 348.68 L259.96 347.61 L254.74 346.68 L249.47 345.89 L244.16 345.26 L238.81 344.77 L233.43 344.43 L228.03 344.24 L222.63 344.20 L217.22 344.31 L211.83 344.57 L206.45 344.99 L201.10 345.55 L195.79 346.26 L190.51 347.11 L185.29 348.11 L180.14 349.26 L175.05 350.54 L170.04 351.97 L165.12 353.54 L160.29 355.23 L155.56 357.07 L150.95 359.03 L146.45 361.11 L142.08 363.32 L137.84 365.65 L133.74 368.09 L129.78 370.65 L125.98 373.31 L122.34 376.07 L118.86 378.93 L115.55 381.89 L112.42 384.93 L109.47 388.06 L106.71 391.26 L104.13 394.54 L101.75 397.88 L99.57 401.29 L97.60 404.75 L95.83 408.26 L94.26 411.82 L92.91 415.42 L91.77 419.05 L90.85 422.71 L90.14 426.39 L89.65 430.08 L89.38 433.79 L89.33 437.49 L89.50 441.20 L89.88 444.89 L90.49 448.57 L91.31 452.23 L92.35 455.86 L93.60 459.46 L95.06 463.01 L96.74 466.53 L98.62 469.99 L100.70 473.39 L102.99 476.74 L105.47 480.01 L108.15 483.21 L111.01 486.34 L114.06 489.38 L117.28 492.33 L120.68 495.19 L124.25 497.95 L127.98 500.61 L131.86 503.16 L135.89 505.60 L140.07 507.93 L144.38 510.13 L148.82 512.22 L153.38 514.17 L158.05 516.00 L162.83 517.70 L167.71 519.26 L172.68 520.68 L177.74 521.97 L182.86 523.11 L188.05 524.11 L193.30 524.96 L198.60 525.66 L203.93 526.22 L209.30 526.63 L214.69 526.89 L220.09 527.00 L225.49 526.95 L230.89 526.76 L236.28 526.42 L241.64 525.93 L246.98 525.29 L252.27 524.50 L257.52 523.57 L262.70 522.49 L267.82 521.27 L272.87 519.90 L277.83 518.40 L282.71 516.76 L287.48 514.99 L292.15 513.09 L296.70 511.06 L301.13 508.91 L305.44 506.64 L309.60 504.25 L313.63 501.74 L317.50 499.13 L321.22 496.42 L324.77 493.60 L328.16 490.69 L331.37 487.69 L334.41 484.60 L337.26 481.43 L339.92 478.19 L342.39 474.87 L344.66 471.49 L346.73 468.06 L348.60 464.56 L350.26 461.03 L351.71 457.45 L352.95 453.83 L355.52 452.51 L358.13 451.23 L360.76 449.97 L363.43 448.74 L366.12 447.54 L368.84 446.37 L371.58 445.23 L374.36 444.12 L377.15 443.04 L379.98 442.00 L382.82 440.98 L385.69 440.00 L388.59 439.05 L391.50 438.13 L394.43 437.24 L397.39 436.39 L400.36 435.56 L403.36 434.78 L406.37 434.02 L409.40 433.30 L412.44 432.61 L415.50 431.96 L418.57 431.34 L421.66 430.75 L424.76 430.20 L427.88 429.69 L431.00 429.20 L434.13 428.76 L437.28 428.34 L440.43 427.97 L443.59 427.62 L446.76 427.32 L449.94 427.05 L453.12 426.81 L456.30 426.61 L459.49 426.44 L462.68 426.31 L465.88 426.22 L469.07 426.16 L472.27 426.14 L475.46 426.15 L478.66 426.20 L481.85 426.28 L485.04 426.40 L488.22 426.56 L491.40 426.75 L494.58 426.97 L497.75 427.23 L500.91 427.53 L504.06 427.86 L507.21 428.23 L510.34 428.63 L513.47 429.07 L516.58 429.54 L519.68 430.04 L522.77 430.59 L525.85 431.16 L528.91 431.77 L531.95 432.41 L534.98 433.09 L537.99 433.80 L540.99 434.55 L543.96 435.33 L546.92 436.14 L549.86 436.98 L552.77 437.86 L555.66 438.77 L558.54 439.71 L561.38 440.69 L564.21 441.69 L567.01 442.73 L569.78 443.80 L572.53 444.90 L575.25 446.03 L577.95 447.19 L580.61 448.38 L583.25 449.60 L585.85 450.85 L588.43 452.13 L589.67 455.73 L591.13 459.29 L592.80 462.80 L594.67 466.26 L596.74 469.67 L599.02 473.02 L601.50 476.30 L604.16 479.50 L607.02 482.63 L610.06 485.67 L613.28 488.63 L616.67 491.49 L620.23 494.26 L623.95 496.92 L627.83 499.47 L631.85 501.92 L636.02 504.25 L640.33 506.46 L644.76 508.55 L649.32 510.51 L653.99 512.35 L658.77 514.05 L663.64 515.61 L668.61 517.04 L673.66 518.33 L678.78 519.48 L683.97 520.48 L689.22 521.34 L694.51 522.05 L699.84 522.62 L705.21 523.03 L710.60 523.29 L716.00 523.41 L721.40 523.37 L726.80 523.19 L732.19 522.85 L737.56 522.36 L742.89 521.73 L748.19 520.95 L753.43 520.02 L758.62 518.95 L763.75 517.73 L768.80 516.38 L773.76 514.88 L778.64 513.25 L783.42 511.48 L788.09 509.59 L792.65 507.56 L797.09 505.42 L801.39 503.15 L805.56 500.76 L809.59 498.26 L813.47 495.66 L817.20 492.94 L820.76 490.13 L824.15 487.22 L827.37 484.22 L830.42 481.14 L833.27 477.97 L835.94 474.73 L838.42 471.42 L840.70 468.05 L842.78 464.61 L844.66 461.12 L846.33 457.59 L847.79 454.01 L849.03 450.39 L850.06 446.75 L850.88 443.08 L851.48 439.39 L851.86 435.69 L852.02 431.98 L851.97 428.28 L851.69 424.58 L851.19 420.89 L850.48 417.22 L849.55 413.58 L848.41 409.96 L847.05 406.38 L845.48 402.85 L843.70 399.36 L841.72 395.92 L839.54 392.55 L837.15 389.24 L834.57 386.00 L831.81 382.84 L828.85 379.75 L825.71 376.75 L822.40 373.85 L818.92 371.04 L815.27 368.33 L811.47 365.72 L807.51 363.22 L803.40 360.84 L799.16 358.57 L794.79 356.43 L790.28 354.41 L785.67 352.51 L780.94 350.75 L776.11 349.12 L771.18 347.63 L766.17 346.27 L761.08 345.06 L755.92 343.99 L750.70 343.06 L745.43 342.28 L740.11 341.65 L734.76 341.17 L729.38 340.83 L723.99 340.65 L718.58 340.62 L713.18 340.73 L707.78 341.00 L702.41 341.42 L697.06 341.98 L691.74 342.70 L686.47 343.56 L681.25 344.56 L676.10 345.71 L673.19 344.90 L670.30 344.05 L667.43 343.17 L664.59 342.26 L661.76 341.32 L658.96 340.35 L656.18 339.35 L653.42 338.32 L650.69 337.26 L647.98 336.17 L645.30 335.05 L642.64 333.90 L640.01 332.72 L637.41 331.52 L634.84 330.28 L632.30 329.02 L629.78 327.74 L627.30 326.42 L624.84 325.08 L622.42 323.71 L620.03 322.32 L617.68 320.90 L615.35 319.45 L613.06 317.98 L610.81 316.48 L608.59 314.96 L606.40 313.42 L604.25 311.85 L602.14 310.26 L600.06 308.65 L598.02 307.01 L596.02 305.36 L594.06 303.68 L592.14 301.98 L590.25 300.25 L588.41 298.51 L586.60 296.75 L584.84 294.97 L583.12 293.17 L581.44 291.35 L579.80 289.52 L578.21 287.66 L576.65 285.79 L575.14 283.90 L573.68 282.00 L572.26 280.08 L570.88 278.14 L569.55 276.19 L568.26 274.23 L567.02 272.25 L565.82 270.25 L564.67 268.25 L563.57 266.23 L562.51 264.20 L561.50 262.16 L560.53 260.11 L559.62 258.05 L558.75 255.97 L557.92 253.89 L557.15 251.80 L556.42 249.70 L555.75 247.59 L555.12 245.48 L554.54 243.36 L554.00 241.23 L553.52 239.10 L553.09 236.96 L552.70 234.81 L552.37 232.67 L552.08 230.51 L551.84 228.36 L551.65 226.20 L551.51 224.04 L551.43 221.88 L551.39 219.72 L551.39 217.56 L551.45 215.40 L551.56 213.23 Z"/></clipPath></defs>
<g clip-path="url(#cAbove)"><g clip-path="url(#cBody)" opacity="0.075"><path d="M-58.70 0L-49.85 623 M-11.00 0L-2.15 623 M36.70 0L45.55 623 M84.40 0L93.25 623 M132.10 0L140.95 623 M179.80 0L188.65 623 M227.50 0L236.35 623 M275.20 0L284.05 623 M322.90 0L331.75 623 M370.60 0L379.45 623 M418.30 0L427.15 623 M466.00 0L474.85 623 M513.70 0L522.55 623 M561.40 0L570.25 623 M609.10 0L617.95 623 M656.80 0L665.65 623 M704.50 0L713.35 623 M752.20 0L761.05 623 M799.90 0L808.75 623 M847.60 0L856.45 623 M895.30 0L904.15 623 M943.00 0L951.85 623 M990.70 0L999.55 623 M1038.40 0L1047.25 623 M0 -18.40L1018 -27.56 M0 16.30L1018 7.14 M0 51.00L1018 41.84 M0 85.70L1018 76.54 M0 120.40L1018 111.24 M0 155.10L1018 145.94 M0 189.80L1018 180.64 M0 224.50L1018 215.34 M0 259.20L1018 250.04 M0 293.90L1018 284.74 M0 328.60L1018 319.44 M0 363.30L1018 354.14 M0 398.20L1018 389.04 M0 433.10L1018 423.94 M0 468.00L1018 458.84 M0 502.90L1018 493.74 M0 537.80L1018 528.64 M0 572.70L1018 563.54 M0 607.60L1018 598.44 M0 642.50L1018 633.34" stroke="#000" stroke-width="1" fill="none"/><path d="M-49.16 0L-40.31 623 M-39.62 0L-30.77 623 M-30.08 0L-21.23 623 M-20.54 0L-11.69 623 M-1.46 0L7.39 623 M8.08 0L16.93 623 M17.62 0L26.47 623 M27.16 0L36.01 623 M46.24 0L55.09 623 M55.78 0L64.63 623 M65.32 0L74.17 623 M74.86 0L83.71 623 M93.94 0L102.79 623 M103.48 0L112.33 623 M113.02 0L121.87 623 M122.56 0L131.41 623 M141.64 0L150.49 623 M151.18 0L160.03 623 M160.72 0L169.57 623 M170.26 0L179.11 623 M189.34 0L198.19 623 M198.88 0L207.73 623 M208.42 0L217.27 623 M217.96 0L226.81 623 M237.04 0L245.89 623 M246.58 0L255.43 623 M256.12 0L264.97 623 M265.66 0L274.51 623 M284.74 0L293.59 623 M294.28 0L303.13 623 M303.82 0L312.67 623 M313.36 0L322.21 623 M332.44 0L341.29 623 M341.98 0L350.83 623 M351.52 0L360.37 623 M361.06 0L369.91 623 M380.14 0L388.99 623 M389.68 0L398.53 623 M399.22 0L408.07 623 M408.76 0L417.61 623 M427.84 0L436.69 623 M437.38 0L446.23 623 M446.92 0L455.77 623 M456.46 0L465.31 623 M475.54 0L484.39 623 M485.08 0L493.93 623 M494.62 0L503.47 623 M504.16 0L513.01 623 M523.24 0L532.09 623 M532.78 0L541.63 623 M542.32 0L551.17 623 M551.86 0L560.71 623 M570.94 0L579.79 623 M580.48 0L589.33 623 M590.02 0L598.87 623 M599.56 0L608.41 623 M618.64 0L627.49 623 M628.18 0L637.03 623 M637.72 0L646.57 623 M647.26 0L656.11 623 M666.34 0L675.19 623 M675.88 0L684.73 623 M685.42 0L694.27 623 M694.96 0L703.81 623 M714.04 0L722.89 623 M723.58 0L732.43 623 M733.12 0L741.97 623 M742.66 0L751.51 623 M761.74 0L770.59 623 M771.28 0L780.13 623 M780.82 0L789.67 623 M790.36 0L799.21 623 M809.44 0L818.29 623 M818.98 0L827.83 623 M828.52 0L837.37 623 M838.06 0L846.91 623 M857.14 0L865.99 623 M866.68 0L875.53 623 M876.22 0L885.07 623 M885.76 0L894.61 623 M904.84 0L913.69 623 M914.38 0L923.23 623 M923.92 0L932.77 623 M933.46 0L942.31 623 M952.54 0L961.39 623 M962.08 0L970.93 623 M971.62 0L980.47 623 M981.16 0L990.01 623 M1000.24 0L1009.09 623 M1009.78 0L1018.63 623 M1019.32 0L1028.17 623 M1028.86 0L1037.71 623 M1047.94 0L1056.79 623 M1057.48 0L1066.33 623 M1067.02 0L1075.87 623 M1076.56 0L1085.41 623 M0 -11.46L1018 -20.62 M0 -4.52L1018 -13.68 M0 2.42L1018 -6.74 M0 9.36L1018 0.20 M0 23.24L1018 14.08 M0 30.18L1018 21.02 M0 37.12L1018 27.96 M0 44.06L1018 34.90 M0 57.94L1018 48.78 M0 64.88L1018 55.72 M0 71.82L1018 62.66 M0 78.76L1018 69.60 M0 92.64L1018 83.48 M0 99.58L1018 90.42 M0 106.52L1018 97.36 M0 113.46L1018 104.30 M0 127.34L1018 118.18 M0 134.28L1018 125.12 M0 141.22L1018 132.06 M0 148.16L1018 139.00 M0 162.04L1018 152.88 M0 168.98L1018 159.82 M0 175.92L1018 166.76 M0 182.86L1018 173.70 M0 196.74L1018 187.58 M0 203.68L1018 194.52 M0 210.62L1018 201.46 M0 217.56L1018 208.40 M0 231.44L1018 222.28 M0 238.38L1018 229.22 M0 245.32L1018 236.16 M0 252.26L1018 243.10 M0 266.14L1018 256.98 M0 273.08L1018 263.92 M0 280.02L1018 270.86 M0 286.96L1018 277.80 M0 300.84L1018 291.68 M0 307.78L1018 298.62 M0 314.72L1018 305.56 M0 321.66L1018 312.50 M0 335.54L1018 326.38 M0 342.48L1018 333.32 M0 349.42L1018 340.26 M0 356.36L1018 347.20 M0 370.28L1018 361.12 M0 377.26L1018 368.10 M0 384.24L1018 375.08 M0 391.22L1018 382.06 M0 405.18L1018 396.02 M0 412.16L1018 403.00 M0 419.14L1018 409.98 M0 426.12L1018 416.96 M0 440.08L1018 430.92 M0 447.06L1018 437.90 M0 454.04L1018 444.88 M0 461.02L1018 451.86 M0 474.98L1018 465.82 M0 481.96L1018 472.80 M0 488.94L1018 479.78 M0 495.92L1018 486.76 M0 509.88L1018 500.72 M0 516.86L1018 507.70 M0 523.84L1018 514.68 M0 530.82L1018 521.66 M0 544.78L1018 535.62 M0 551.76L1018 542.60 M0 558.74L1018 549.58 M0 565.72L1018 556.56 M0 579.68L1018 570.52 M0 586.66L1018 577.50 M0 593.64L1018 584.48 M0 600.62L1018 591.46 M0 614.58L1018 605.42 M0 621.56L1018 612.40 M0 628.54L1018 619.38 M0 635.52L1018 626.36 M0 649.48L1018 640.32 M0 656.46L1018 647.30 M0 663.44L1018 654.28 M0 670.42L1018 661.26" stroke="#000" stroke-width="1" fill="none" opacity="0.5"/></g>
</g><path d="M466.67 47.5L467.65 116M469.00 211L471.10 359.10" stroke="#2c2cc8" stroke-opacity="0.9" stroke-width="0.85"/>
<path d="M471 389.1L471 474" stroke="#eeeeea" stroke-opacity="0.55" stroke-width="3" stroke-dasharray="6.2 7.2" fill="none"/>
<path d="M472.2 508.5L472.5 519" stroke="#fff" stroke-width="2"/>
<path d="M470.9 476.2 L481.2 486 Q482.6 488 480.8 489.4 Q479 490.6 477.2 489.2 L474.1 486.4 L474.1 502 Q474.1 504.6 470.9 504.6 Q467.7 504.6 467.7 502 L467.7 486.4 L464.6 489.2 Q462.8 490.6 461 489.4 Q459.2 488 460.6 486 Z" fill="#fff" stroke="#fff" stroke-width="4.6" stroke-linejoin="round"/>
<path d="M470.9 476.2 L481.2 486 Q482.6 488 480.8 489.4 Q479 490.6 477.2 489.2 L474.1 486.4 L474.1 502 Q474.1 504.6 470.9 504.6 Q467.7 504.6 467.7 502 L467.7 486.4 L464.6 489.2 Q462.8 490.6 461 489.4 Q459.2 488 460.6 486 Z" fill="#0ea3e6" stroke="#0b2a3c" stroke-width="1.2" stroke-linejoin="round"/>
</svg><style>
#dlg{position:absolute;left:770px;top:61px;width:229px;height:184px;background:rgba(222,222,222,0.96);border:1px solid #b3b3b3;box-shadow:0 1px 3px rgba(0,0,0,0.18);color:#3c3c3c;font-size:10.3px;}
#dlg .hd{position:absolute;left:0;top:0;width:229px;height:23px;background:rgba(214,214,214,0.9);border-bottom:1px solid #a9a9a9;}
#dlg .ttl{position:absolute;left:26.3px;top:6px;font-size:10.1px;color:#5a5a5a;letter-spacing:-0.05px;line-height:12px;}
#dlg .min{position:absolute;left:4.8px;top:6.9px;width:9.2px;height:9.2px;border-radius:50%;background:#151515;}
#dlg .min i{position:absolute;left:2px;top:3.8px;width:5.4px;height:1.8px;background:#e8e8e8;}
#dlg .lb{position:absolute;left:10.3px;line-height:12px;white-space:nowrap;color:#3d3d3d;}
#dlg .sel{position:absolute;left:94.5px;top:25.4px;width:77px;height:23px;background:#5b8ab5;border-radius:2px;color:#fff;font-size:11.1px;}
#dlg .sel span{position:absolute;left:19.4px;top:5.8px;line-height:13px;white-space:nowrap;}
#dlg .dd{position:absolute;left:94.6px;top:77.8px;width:121.4px;height:22.4px;background:#cbcbcb;}
#dlg .dd span{position:absolute;left:21.2px;top:5.4px;line-height:12px;white-space:nowrap;color:#444;font-size:10.7px;letter-spacing:0.08px;}
#dlg .inp{position:absolute;left:97px;top:106.3px;width:104px;height:15px;background:#fff;border:1px solid #6a6a6a;}
#dlg .inp span{position:absolute;left:2.8px;top:1.7px;line-height:13px;color:#444;font-size:11px;}
.tri{position:absolute;width:0;height:0;border-left:3px solid transparent;border-right:3px solid transparent;border-top:4px solid #2e2e2e;}
#dlg .ft{position:absolute;left:0;top:147.6px;width:229px;height:36.4px;background:rgba(213,213,213,0.9);border-top:1px solid #aeaeae;}
#dlg .btn{position:absolute;top:157.3px;width:57.6px;height:16.4px;background:#e5e5e5;border:1px solid #c2c2c2;text-align:center;font-size:12.2px;line-height:18.2px;letter-spacing:0.55px;color:#595959;}
#dlg .info{position:absolute;left:12.6px;top:161px;width:12.6px;height:12.6px;border-radius:50%;background:#111;}
#val{position:absolute;left:605px;top:513.8px;width:89.6px;height:21.6px;background:#c9c9c9;}
#val .bx{position:absolute;left:9.2px;top:1.6px;width:65px;height:15.4px;background:#fff;border:1.2px solid #0a78d6;}
#val .bx b{position:absolute;left:30.6px;top:1.2px;width:6.2px;height:13px;background:#2f80d8;color:#fff;font-weight:normal;font-size:11px;line-height:13px;text-align:center;}
</style>
<div id="dlg">
 <div class="hd"><div class="min"><i></i></div><div class="ttl">CHAMFER</div></div>
 <div class="lb" style="top:32px">Edges</div>
 <div class="sel"><svg width="12" height="17" viewBox="0 0 12 17" style="position:absolute;left:5px;top:3.6px"><path d="M1 0.8 L1 12.6 L3.9 10 L6.2 15.4 L8.2 14.5 L5.9 9.3 L9.8 9.1 Z" fill="#f4f4f4" stroke="#222" stroke-width="0.9" stroke-linejoin="round"/></svg><span>6 selected</span></div>
 <svg width="11" height="11" viewBox="0 0 11 11" style="position:absolute;left:180.4px;top:31.2px"><path d="M1.6 1.6L9.4 9.4M9.4 1.6L1.6 9.4" stroke="#383838" stroke-width="1.9"/></svg>
 <div class="lb" style="top:58.2px">Tangent Chain</div>
 <svg width="15" height="15" viewBox="0 0 15 15" style="position:absolute;left:96.8px;top:54.8px"><defs><linearGradient id="cbg" x1="0" y1="0" x2="0" y2="1"><stop offset="0" stop-color="#f6f6f6"/><stop offset="1" stop-color="#cfcfcf"/></linearGradient></defs><rect x="1.2" y="1.2" width="12.4" height="12.4" rx="2.6" fill="url(#cbg)" stroke="#555" stroke-width="1"/><path d="M3.6 7.6L6.2 10.6L11.2 3.6" fill="none" stroke="#111" stroke-width="1.5"/></svg>
 <div class="lb" style="top:84.4px;letter-spacing:-0.1px">Chamfer Type</div>
 <div class="dd"><svg width="17" height="17" viewBox="0 0 17 17" style="position:absolute;left:1.6px;top:3.2px"><defs><linearGradient id="icg" x1="0" y1="0" x2="0" y2="1"><stop offset="0" stop-color="#ffffff"/><stop offset="1" stop-color="#dfe3e8"/></linearGradient></defs><path d="M1.6 7.4L7.6 1.6H14.2Q15.6 1.6 15.6 3V14.2Q15.6 15.6 14.2 15.6H3Q1.6 15.6 1.6 14.2Z" fill="url(#icg)" stroke="#333" stroke-width="1"/><path d="M1.6 7.4L7.6 1.6" stroke="#1b62d6" stroke-width="1.2"/><path d="M0.8 1.3H8.6M1.2 0.4V8.2" stroke="#e81c1c" stroke-width="1.3"/><path d="M8.8 1.3L6.6 0M8.8 1.3L6.6 2.6" stroke="#e81c1c" stroke-width="1"/></svg><span>Equal distance</span><div class="tri" style="left:110.6px;top:9.4px"></div></div>
 <div class="lb" style="top:109.8px">Distance</div>
 <div class="inp"><span>2 mm</span></div>
 <div class="tri" style="left:205.3px;top:113.4px"></div>
 <div class="ft"></div>
 <div class="info"><svg width="12.6" height="12.6" viewBox="0 0 12.6 12.6" style="position:absolute;left:0;top:0"><circle cx="6.3" cy="3.4" r="1.25" fill="#f2f2f2"/><path d="M4.6 5.4H7.3V9.2H8.2V10.3H4.5V9.2H5.4V6.5H4.6Z" fill="#f2f2f2"/></svg></div>
 <div class="btn" style="left:83.2px">OK</div>
 <div class="btn" style="left:153.2px">Cancel</div>
</div>
<div id="val"><div class="bx"><b>2</b></div><div class="tri" style="left:80.8px;top:8.8px;border-top-color:#3a3a3a"></div></div>

</body></html>
